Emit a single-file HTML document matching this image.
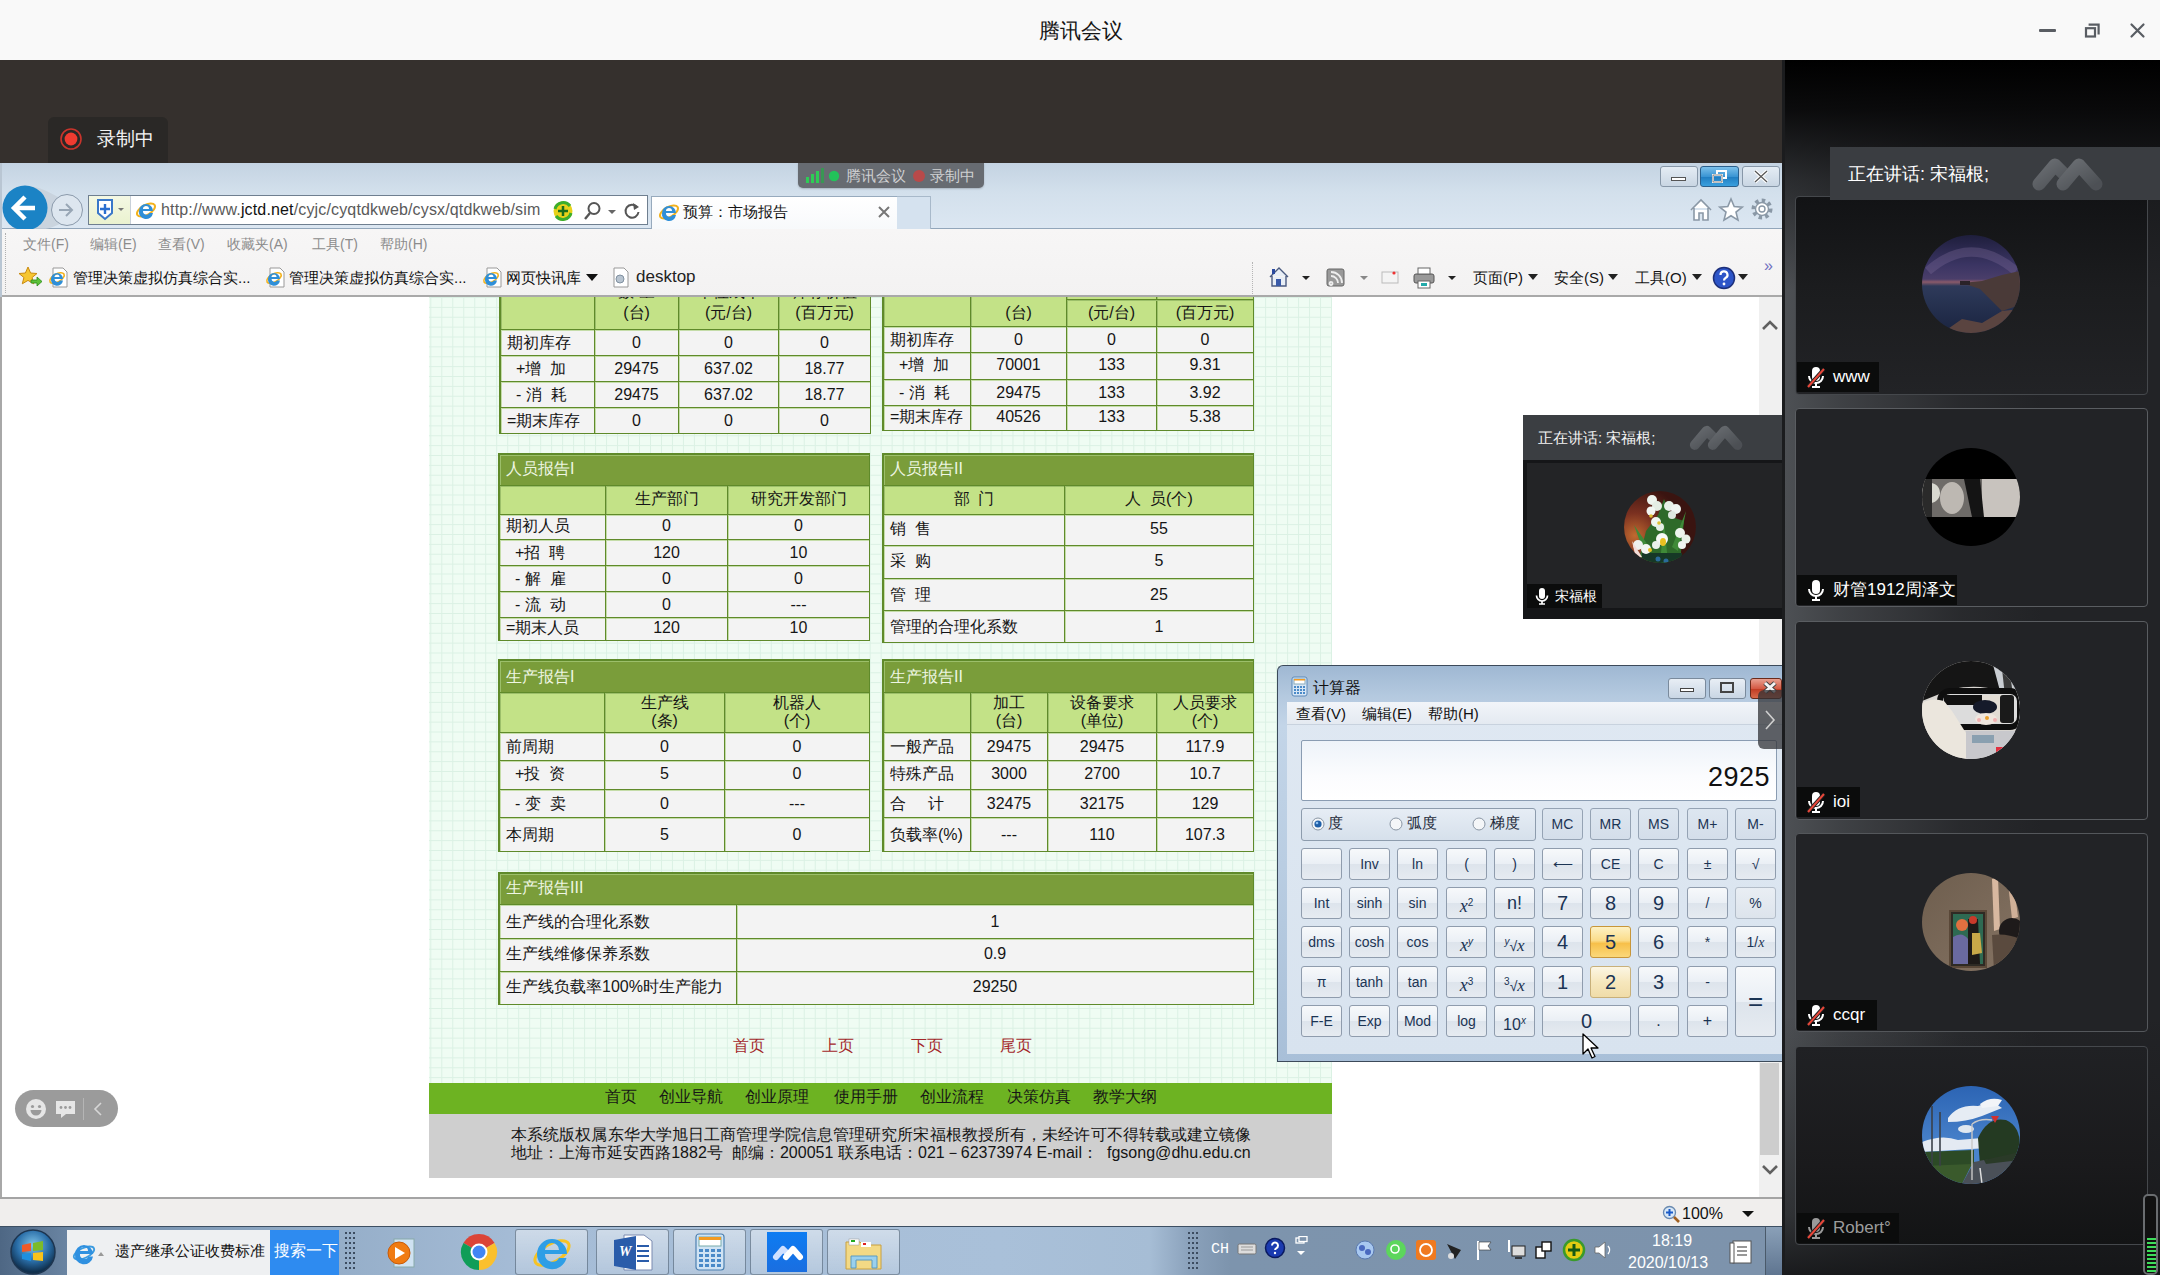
<!DOCTYPE html><html><head><meta charset="utf-8"><style>
*{margin:0;padding:0;box-sizing:border-box}
html,body{width:2160px;height:1275px;overflow:hidden;background:#f9f9f9;font-family:"Liberation Sans",sans-serif;}
.a{position:absolute}
.t{position:absolute;white-space:nowrap}
</style></head><body><div class="a" style="left:0px;top:0px;width:2160px;height:60px;background:#f9f9f9"></div>
<div class="t" style="left:1039px;top:17px;font-size:21px;color:#151515;">腾讯会议</div>
<div class="a" style="left:2039px;top:29px;width:17px;height:3px;background:#595d63;border-radius:1px"></div>
<svg class="a" style="left:2080px;top:20px;" width="24" height="24" viewBox="0 0 24 24"><rect x="6" y="8.2" width="9" height="8.3" fill="none" stroke="#595d63" stroke-width="2.2"/><path d="M8.6 4.6H18.6V14.6" fill="none" stroke="#595d63" stroke-width="2.2"/></svg>
<svg class="a" style="left:2126px;top:19px;" width="24" height="24" viewBox="0 0 24 24"><path d="M5.5 5.5L17.5 17.5M17.5 5.5L5.5 17.5" stroke="#595d63" stroke-width="2.2" stroke-linecap="round"/></svg>
<div class="a" style="left:0px;top:60px;width:1782px;height:103px;background:#35302d"></div>
<div class="a" style="left:48px;top:117px;width:120px;height:46px;background:#2a2826;border-radius:6px 6px 0 0"></div>
<svg class="a" style="left:59px;top:128px;" width="24" height="24" viewBox="0 0 24 24"><circle cx="12" cy="11" r="10" fill="none" stroke="#c8342c" stroke-width="1.6"/><circle cx="12" cy="11" r="6.4" fill="#f03b30"/></svg>
<div class="t" style="left:97px;top:128px;font-size:19px;color:#f4f4f4;line-height:22px">录制中</div>
<div class="a" style="left:0px;top:163px;width:1782px;height:66px;background:linear-gradient(180deg,#c4d3e2 0%,#d3e0ec 45%,#dce7f2 100%)"></div>
<div class="a" style="left:0px;top:228px;width:1782px;height:1px;background:#92a6ba"></div>
<div class="a" style="left:0px;top:163px;width:2px;height:134px;background:#b9c6d3"></div>
<div class="a" style="left:0px;top:297px;width:2px;height:901px;background:#a8a8a8"></div>
<svg class="a" style="left:0px;top:183px;" width="100" height="50" viewBox="0 0 100 50"><path d="M25 3 C40 3 50 10 62 16 L62 40 C50 46 40 48 25 48Z" fill="#c6d0da" opacity="0.8"/><circle cx="67" cy="27" r="15.5" fill="#dde6ef" stroke="#8b9aab" stroke-width="1"/><path d="M59 27h13M66 21l6 6-6 6" fill="none" stroke="#98a6b5" stroke-width="2"/><circle cx="25" cy="25" r="22.5" fill="#1b83c5"/><path d="M14 25h21M25 14L14 25l11 11" fill="none" stroke="#fff" stroke-width="4.5" stroke-linejoin="miter"/></svg>
<div class="a" style="left:88px;top:195px;width:560px;height:30px;background:#fff;border:1px solid #6f7f90"></div>
<div class="a" style="left:89px;top:196px;width:41px;height:28px;background:linear-gradient(180deg,#f4f8e4,#eaf2cf)"></div>
<svg class="a" style="left:94px;top:198px;" width="34" height="24" viewBox="0 0 34 24"><path d="M4 2h14v13l-7 6-7-6z" fill="#fff" stroke="#3a78c9" stroke-width="2"/><path d="M11 6v10M6 11h10" stroke="#2a6fd0" stroke-width="2.4"/><path d="M24 10l3 3 3-3z" fill="#777"/></svg>
<div class="a" style="left:130px;top:196px;width:1px;height:28px;background:#c8d0d8"></div>
<svg class="a" style="left:135px;top:199px;" width="22" height="22" viewBox="0 0 22 22"><ellipse cx="11" cy="11" rx="10" ry="5" fill="none" stroke="#f2b21e" stroke-width="2" transform="rotate(-30 11 11)"/><path d="M4 12 a7 7 0 1 1 14 0H8a3.5 3.5 0 0 0 6.5 2h3.5a7 7 0 0 1-14-2zM8 10h6a3 3 0 0 0-6 0z" fill="#2f8fd8"/></svg>
<div class="t" style="left:161px;top:199px;font-size:16px;line-height:22px;letter-spacing:0.15px"><span style="color:#5a5a5a">http://www.</span><span style="color:#111">jctd.net</span><span style="color:#5a5a5a">/cyjc/cyqtdkweb/cysx/qtdkweb/sim</span></div>
<svg class="a" style="left:552px;top:200px;" width="22" height="22" viewBox="0 0 22 22"><circle cx="11" cy="11" r="9.5" fill="#e8d21a"/><path d="M3 9a8.5 8.5 0 0 1 15-3" fill="none" stroke="#3cae2c" stroke-width="3"/><path d="M19 13a8.5 8.5 0 0 1-15 3" fill="none" stroke="#3cae2c" stroke-width="3"/><path d="M11 6v10M6 11h10" stroke="#1a6d1a" stroke-width="2.5"/></svg>
<svg class="a" style="left:582px;top:201px;" width="60" height="20" viewBox="0 0 60 20"><circle cx="12" cy="7.5" r="5.5" fill="none" stroke="#555" stroke-width="2"/><path d="M8 12l-5 6" stroke="#555" stroke-width="2.4"/><path d="M26 9l4 4 4-4z" fill="#666"/><path d="M55 6a6.5 6.5 0 1 0 1.5 5" fill="none" stroke="#555" stroke-width="2"/><path d="M51 2l6 4-5 3z" fill="#555"/></svg>
<div class="a" style="left:651px;top:196px;width:247px;height:34px;background:linear-gradient(180deg,#ffffff,#f7f9fb);border:1px solid #97aabd;border-bottom:none"></div>
<svg class="a" style="left:658px;top:201px;" width="22" height="22" viewBox="0 0 22 22"><ellipse cx="11" cy="11" rx="10" ry="5" fill="none" stroke="#f2b21e" stroke-width="2" transform="rotate(-30 11 11)"/><path d="M4 12 a7 7 0 1 1 14 0H8a3.5 3.5 0 0 0 6.5 2h3.5a7 7 0 0 1-14-2zM8 10h6a3 3 0 0 0-6 0z" fill="#2f8fd8"/></svg>
<div class="t" style="left:683px;top:202px;font-size:15px;color:#151515;line-height:20px">预算：市场报告</div>
<svg class="a" style="left:877px;top:205px;" width="14" height="14" viewBox="0 0 14 14"><path d="M2 2L12 12M12 2L2 12" stroke="#777" stroke-width="2"/></svg>
<div class="a" style="left:897px;top:196px;width:34px;height:33px;background:#d5e2ef;border:1px solid #a8b9ca;border-left:none;border-bottom:none"></div>
<div class="a" style="left:1660px;top:166px;width:38px;height:21px;background:linear-gradient(180deg,#e4ecf4,#c9d6e3);border:1px solid #8797a8;border-radius:3px"></div>
<div class="a" style="left:1671px;top:177px;width:15px;height:4px;background:#fff;border:1px solid #555"></div>
<div class="a" style="left:1700px;top:166px;width:39px;height:21px;background:linear-gradient(180deg,#7cc0ea 0%,#3a95d4 50%,#1f7cc0 51%,#3aa0de 100%);border:1px solid #2a5f8c;border-radius:3px"></div>
<svg class="a" style="left:1710px;top:168px;" width="20" height="17" viewBox="0 0 20 17"><rect x="3" y="7" width="9" height="7" fill="none" stroke="#fff" stroke-width="2"/><path d="M7 7V3h9v7h-4" fill="none" stroke="#fff" stroke-width="2"/><rect x="3" y="7" width="9" height="7" fill="none" stroke="#333" stroke-width="0.6"/></svg>
<div class="a" style="left:1742px;top:166px;width:38px;height:21px;background:linear-gradient(180deg,#e4ecf4,#c9d6e3);border:1px solid #8797a8;border-radius:3px"></div>
<svg class="a" style="left:1752px;top:168px;" width="18" height="17" viewBox="0 0 18 17"><path d="M3 3L15 14M15 3L3 14" stroke="#fff" stroke-width="3.6"/><path d="M3 3L15 14M15 3L3 14" stroke="#555" stroke-width="1.2"/></svg>
<svg class="a" style="left:1688px;top:197px;" width="90" height="26" viewBox="0 0 90 26"><path d="M3 13L13 3l10 10M6 11v12h5v-7h4v7h5V11" fill="#fff" stroke="#8a98a6" stroke-width="1.6"/><path d="M43 2l3.2 7.5 8 .6-6.2 5 2 8-7-4.3-7 4.3 2-8-6.2-5 8-.6z" fill="#fff" stroke="#8a98a6" stroke-width="1.6"/><circle cx="74" cy="12" r="8" fill="none" stroke="#8a98a6" stroke-width="5" stroke-dasharray="3.2 3"/><circle cx="74" cy="12" r="6.5" fill="#fff" stroke="#8a98a6" stroke-width="1.4"/><circle cx="74" cy="12" r="3" fill="none" stroke="#8a98a6" stroke-width="1.4"/></svg>
<div class="a" style="left:2px;top:229px;width:1780px;height:68px;background:linear-gradient(180deg,#f7f6f6,#f3f2f2)"></div>
<div class="a" style="left:5px;top:233px;width:1px;height:60px;border-left:1px dotted #b0b0b0"></div>
<div class="t" style="left:23px;top:235px;font-size:14px;color:#8c8c8c;line-height:18px">文件(F)</div>
<div class="t" style="left:90px;top:235px;font-size:14px;color:#8c8c8c;line-height:18px">编辑(E)</div>
<div class="t" style="left:158px;top:235px;font-size:14px;color:#8c8c8c;line-height:18px">查看(V)</div>
<div class="t" style="left:227px;top:235px;font-size:14px;color:#8c8c8c;line-height:18px">收藏夹(A)</div>
<div class="t" style="left:312px;top:235px;font-size:14px;color:#8c8c8c;line-height:18px">工具(T)</div>
<div class="t" style="left:380px;top:235px;font-size:14px;color:#8c8c8c;line-height:18px">帮助(H)</div>
<svg class="a" style="left:17px;top:265px;" width="26" height="24" viewBox="0 0 26 24"><path d="M11 2l2.6 6 6.4.5-4.9 4 1.6 6.3L11 15.4 5.3 18.8l1.6-6.3L2 8.5l6.4-.5z" fill="#f6c631" stroke="#c98a10" stroke-width="1"/><path d="M14 15h6v-3l5 4.5-5 4.5v-3h-6z" fill="#5cc23a" stroke="#2c8a1a" stroke-width="0.8"/></svg>
<svg class="a" style="left:47px;top:266px;" width="22" height="22" viewBox="0 0 22 22"><path d="M6 2h10l4 4v15H6z" fill="#fff" stroke="#999" stroke-width="1"/><ellipse cx="10" cy="12" rx="8" ry="4" fill="none" stroke="#f2b21e" stroke-width="1.6" transform="rotate(-30 10 12)"/><path d="M4 13 a6 6 0 1 1 12 0H7.5a3 3 0 0 0 5.5 1.5h3a6 6 0 0 1-12-1.5zM7.5 11h5a2.5 2.5 0 0 0-5 0z" fill="#2f8fd8"/></svg>
<div class="t" style="left:73px;top:268px;font-size:15px;color:#111;line-height:20px">管理决策虚拟仿真综合实...</div>
<svg class="a" style="left:264px;top:266px;" width="22" height="22" viewBox="0 0 22 22"><path d="M6 2h10l4 4v15H6z" fill="#fff" stroke="#999" stroke-width="1"/><ellipse cx="10" cy="12" rx="8" ry="4" fill="none" stroke="#f2b21e" stroke-width="1.6" transform="rotate(-30 10 12)"/><path d="M4 13 a6 6 0 1 1 12 0H7.5a3 3 0 0 0 5.5 1.5h3a6 6 0 0 1-12-1.5zM7.5 11h5a2.5 2.5 0 0 0-5 0z" fill="#2f8fd8"/></svg>
<div class="t" style="left:289px;top:268px;font-size:15px;color:#111;line-height:20px">管理决策虚拟仿真综合实...</div>
<svg class="a" style="left:481px;top:266px;" width="22" height="22" viewBox="0 0 22 22"><path d="M6 2h10l4 4v15H6z" fill="#fff" stroke="#999" stroke-width="1"/><ellipse cx="10" cy="12" rx="8" ry="4" fill="none" stroke="#f2b21e" stroke-width="1.6" transform="rotate(-30 10 12)"/><path d="M4 13 a6 6 0 1 1 12 0H7.5a3 3 0 0 0 5.5 1.5h3a6 6 0 0 1-12-1.5zM7.5 11h5a2.5 2.5 0 0 0-5 0z" fill="#2f8fd8"/></svg>
<div class="t" style="left:506px;top:268px;font-size:15px;color:#111;line-height:20px">网页快讯库</div>
<svg class="a" style="left:585px;top:273px;" width="14" height="8" viewBox="0 0 14 8"><path d="M1 1h12L7 8z" fill="#111"/></svg>
<svg class="a" style="left:611px;top:266px;" width="20" height="22" viewBox="0 0 20 22"><path d="M3 2h10l4 4v15H3z" fill="#fff" stroke="#999" stroke-width="1"/><circle cx="9" cy="13" r="4" fill="#b8c4d0" stroke="#8090a0"/></svg>
<div class="t" style="left:636px;top:267px;font-size:17px;color:#222;line-height:20px">desktop</div>
<div class="a" style="left:1252px;top:262px;width:1px;height:34px;border-left:1px dotted #b5b5b5"></div>
<svg class="a" style="left:1266px;top:264px;" width="500" height="28" viewBox="0 0 500 28"><path d="M4 13L13 4l9 9M6 12v10h14V12" fill="#e8eef6" stroke="#4a5a80" stroke-width="1.4"/><rect x="10" y="15" width="5" height="7" fill="#3a5aa8"/><rect x="6" y="5" width="3" height="5" fill="#2a4aa0"/><path d="M36 12l4 4 4-4z" fill="#222"/><rect x="61" y="5" width="17" height="17" rx="2" fill="#999" stroke="#666"/><path d="M65 18a1.5 1.5 0 1 0 0.1 0M65 12a7 7 0 0 1 7 7M65 8a11 11 0 0 1 11 11" fill="none" stroke="#eee" stroke-width="1.8"/><path d="M94 12l4 4 4-4z" fill="#888"/><rect x="116" y="8" width="16" height="11" fill="#f4f4f4" stroke="#bbb"/><circle cx="128" cy="9" r="1.6" fill="#e33"/><rect x="148" y="10" width="20" height="9" rx="2" fill="#999" stroke="#555"/><rect x="152" y="4" width="12" height="6" fill="#fff" stroke="#666"/><rect x="152" y="17" width="12" height="7" fill="#fff" stroke="#666"/><rect x="155" y="19" width="6" height="3" fill="#2aa"/><path d="M182 12l4 4 4-4z" fill="#222"/></svg>
<div class="t" style="left:1473px;top:268px;font-size:15px;color:#151515;line-height:20px">页面(P)</div>
<div class="t" style="left:1554px;top:268px;font-size:15px;color:#151515;line-height:20px">安全(S)</div>
<div class="t" style="left:1635px;top:268px;font-size:15px;color:#151515;line-height:20px">工具(O)</div>
<svg class="a" style="left:1528px;top:274px;" width="10" height="7" viewBox="0 0 10 7"><path d="M0 0h10L5 6z" fill="#222"/></svg>
<svg class="a" style="left:1608px;top:274px;" width="10" height="7" viewBox="0 0 10 7"><path d="M0 0h10L5 6z" fill="#222"/></svg>
<svg class="a" style="left:1692px;top:274px;" width="10" height="7" viewBox="0 0 10 7"><path d="M0 0h10L5 6z" fill="#222"/></svg>
<svg class="a" style="left:1738px;top:274px;" width="10" height="7" viewBox="0 0 10 7"><path d="M0 0h10L5 6z" fill="#222"/></svg>
<svg class="a" style="left:1712px;top:266px;" width="24" height="24" viewBox="0 0 24 24"><circle cx="12" cy="12" r="10.5" fill="#2d55c8" stroke="#1c2f7a" stroke-width="1.5"/><path d="M8.5 9a3.5 3.5 0 1 1 5 3c-1.3.7-1.5 1.2-1.5 2.5" fill="none" stroke="#fff" stroke-width="2.2"/><circle cx="12" cy="18" r="1.4" fill="#fff"/></svg>
<div class="t" style="left:1764px;top:257px;font-size:16px;color:#7070c0;line-height:18px">»</div>
<div class="a" style="left:2px;top:295px;width:1780px;height:2px;background:#a9a9a9"></div>
<div class="a" style="left:2px;top:297px;width:1757px;height:901px;background:#fff"></div>
<div class="a" style="left:1759px;top:297px;width:23px;height:901px;background:#f0f0f0"></div>
<svg class="a" style="left:1760px;top:317px;" width="20" height="16" viewBox="0 0 20 16"><path d="M3 12L10 5l7 7" fill="none" stroke="#606060" stroke-width="2.6"/></svg>
<div class="a" style="left:1760px;top:1063px;width:19px;height:92px;background:#cdcdcd"></div>
<svg class="a" style="left:1760px;top:1162px;" width="20" height="16" viewBox="0 0 20 16"><path d="M3 4l7 7 7-7" fill="none" stroke="#606060" stroke-width="2.6"/></svg>
<div class="a" style="left:0px;top:1197px;width:1782px;height:2px;background:#a4a4a4"></div>
<div class="a" style="left:0px;top:1199px;width:1782px;height:27px;background:#f0eeed"></div>
<svg class="a" style="left:1662px;top:1205px;" width="20" height="18" viewBox="0 0 20 18"><circle cx="7.5" cy="7.5" r="6" fill="#d8e8f8" stroke="#6a8ab0" stroke-width="1.3"/><path d="M7.5 4v7M4 7.5h7" stroke="#1a5ac8" stroke-width="2"/><path d="M12 12l5 5" stroke="#a06020" stroke-width="2.6"/></svg>
<div class="t" style="left:1682px;top:1204px;font-size:16px;color:#111;line-height:20px">100%</div>
<svg class="a" style="left:1742px;top:1211px;" width="12" height="7" viewBox="0 0 12 7"><path d="M0 0h12L6 6z" fill="#111"/></svg>
<div class="a" style="left:0px;top:1226px;width:1782px;height:49px;background:linear-gradient(90deg,#4e6784 0px,#6f8aa8 80px,#92abc6 300px,#a5bcd6 520px,#a9c0d9 1000px,#a6bdd5 1150px,#8aa1bb 1190px,#7d94ad 1230px,#7d93ac 1760px)"></div>
<div class="a" style="left:0px;top:1226px;width:1782px;height:1px;background:#3d4f63"></div>
<svg class="a" style="left:5px;top:1228px;" width="56" height="47" viewBox="0 0 56 47"><circle cx="28" cy="24" r="22" fill="url(#orb)" stroke="#1d3550" stroke-width="1.5"/><defs><radialGradient id="orb" cx="50%" cy="35%" r="60%"><stop offset="0" stop-color="#7fc4e8"/><stop offset="0.6" stop-color="#2a6ea8"/><stop offset="1" stop-color="#10304e"/></radialGradient></defs><path d="M17 17l9-2v8l-9 1z" fill="#f05a28"/><path d="M28 15l10-2v9l-10 1z" fill="#7cbb2a"/><path d="M17 26l9-1v8l-9-2z" fill="#1e90e0"/><path d="M28 25l10-1v9l-10-1z" fill="#f8c21a"/></svg>
<div class="a" style="left:67px;top:1230px;width:203px;height:45px;background:#eef0f2"></div>
<svg class="a" style="left:72px;top:1238px;" width="34" height="30" viewBox="0 0 34 30"><ellipse cx="12" cy="15" rx="11" ry="5" fill="none" stroke="#3a9be0" stroke-width="1.8" transform="rotate(-25 12 15)"/><path d="M3 16 a9 9 0 1 1 18 0H8a4.5 4.5 0 0 0 8.5 2.5h4.5a9 9 0 0 1-18-2.5zM8 13h8a4 4 0 0 0-8 0z" fill="#2f90e0"/><path d="M26 18l3-4 3 4z" fill="#999"/></svg>
<div class="t" style="left:115px;top:1241px;font-size:15px;color:#111;line-height:20px">遗产继承公证收费标准</div>
<div class="a" style="left:270px;top:1230px;width:69px;height:45px;background:#2e8bf0"></div>
<div class="t" style="left:274px;top:1241px;font-size:16px;color:#fff;line-height:20px">搜索一下</div>
<svg class="a" style="left:345px;top:1232px;" width="10" height="40" viewBox="0 0 10 40"><rect x="0" y="0" width="2" height="2" fill="#3c4c60"/><rect x="4" y="0" width="2" height="2" fill="#3c4c60"/><rect x="8" y="0" width="2" height="2" fill="#3c4c60"/><rect x="0" y="5" width="2" height="2" fill="#3c4c60"/><rect x="4" y="5" width="2" height="2" fill="#3c4c60"/><rect x="8" y="5" width="2" height="2" fill="#3c4c60"/><rect x="0" y="10" width="2" height="2" fill="#3c4c60"/><rect x="4" y="10" width="2" height="2" fill="#3c4c60"/><rect x="8" y="10" width="2" height="2" fill="#3c4c60"/><rect x="0" y="15" width="2" height="2" fill="#3c4c60"/><rect x="4" y="15" width="2" height="2" fill="#3c4c60"/><rect x="8" y="15" width="2" height="2" fill="#3c4c60"/><rect x="0" y="20" width="2" height="2" fill="#3c4c60"/><rect x="4" y="20" width="2" height="2" fill="#3c4c60"/><rect x="8" y="20" width="2" height="2" fill="#3c4c60"/><rect x="0" y="25" width="2" height="2" fill="#3c4c60"/><rect x="4" y="25" width="2" height="2" fill="#3c4c60"/><rect x="8" y="25" width="2" height="2" fill="#3c4c60"/><rect x="0" y="30" width="2" height="2" fill="#3c4c60"/><rect x="4" y="30" width="2" height="2" fill="#3c4c60"/><rect x="8" y="30" width="2" height="2" fill="#3c4c60"/><rect x="0" y="35" width="2" height="2" fill="#3c4c60"/><rect x="4" y="35" width="2" height="2" fill="#3c4c60"/><rect x="8" y="35" width="2" height="2" fill="#3c4c60"/></svg>
<svg class="a" style="left:1188px;top:1232px;" width="10" height="40" viewBox="0 0 10 40"><rect x="0" y="0" width="2" height="2" fill="#3c4c60"/><rect x="4" y="0" width="2" height="2" fill="#3c4c60"/><rect x="8" y="0" width="2" height="2" fill="#3c4c60"/><rect x="0" y="5" width="2" height="2" fill="#3c4c60"/><rect x="4" y="5" width="2" height="2" fill="#3c4c60"/><rect x="8" y="5" width="2" height="2" fill="#3c4c60"/><rect x="0" y="10" width="2" height="2" fill="#3c4c60"/><rect x="4" y="10" width="2" height="2" fill="#3c4c60"/><rect x="8" y="10" width="2" height="2" fill="#3c4c60"/><rect x="0" y="15" width="2" height="2" fill="#3c4c60"/><rect x="4" y="15" width="2" height="2" fill="#3c4c60"/><rect x="8" y="15" width="2" height="2" fill="#3c4c60"/><rect x="0" y="20" width="2" height="2" fill="#3c4c60"/><rect x="4" y="20" width="2" height="2" fill="#3c4c60"/><rect x="8" y="20" width="2" height="2" fill="#3c4c60"/><rect x="0" y="25" width="2" height="2" fill="#3c4c60"/><rect x="4" y="25" width="2" height="2" fill="#3c4c60"/><rect x="8" y="25" width="2" height="2" fill="#3c4c60"/><rect x="0" y="30" width="2" height="2" fill="#3c4c60"/><rect x="4" y="30" width="2" height="2" fill="#3c4c60"/><rect x="8" y="30" width="2" height="2" fill="#3c4c60"/><rect x="0" y="35" width="2" height="2" fill="#3c4c60"/><rect x="4" y="35" width="2" height="2" fill="#3c4c60"/><rect x="8" y="35" width="2" height="2" fill="#3c4c60"/></svg>
<svg class="a" style="left:384px;top:1236px;" width="36" height="34" viewBox="0 0 36 34"><rect x="10" y="3" width="20" height="28" fill="#cfe2f2" stroke="#8aa" stroke-width="1"/><circle cx="15" cy="17" r="11" fill="#f07b12" stroke="#c85a08"/><path d="M11 11l10 6-10 6z" fill="#fff"/></svg>
<svg class="a" style="left:459px;top:1232px;" width="40" height="40" viewBox="0 0 40 40"><path d="M20 20L4.41 11A18 18 0 0 1 35.59 11Z" fill="#db4437"/><path d="M20 20L35.59 11A18 18 0 0 1 20 38Z" fill="#fbc02d"/><path d="M20 20L20 38A18 18 0 0 1 4.41 11Z" fill="#0f9d58"/><circle cx="20" cy="20" r="8.5" fill="#fff"/><circle cx="20" cy="20" r="6.5" fill="#4285f4"/></svg>
<div class="a" style="left:515px;top:1229px;width:73px;height:46px;background:linear-gradient(180deg,rgba(255,255,255,0.45),rgba(255,255,255,0.15));border:1px solid rgba(60,80,100,0.55);border-radius:3px"></div>
<div class="a" style="left:596px;top:1229px;width:73px;height:46px;background:linear-gradient(180deg,rgba(255,255,255,0.45),rgba(255,255,255,0.15));border:1px solid rgba(60,80,100,0.55);border-radius:3px"></div>
<div class="a" style="left:673px;top:1229px;width:73px;height:46px;background:linear-gradient(180deg,rgba(255,255,255,0.45),rgba(255,255,255,0.15));border:1px solid rgba(60,80,100,0.55);border-radius:3px"></div>
<div class="a" style="left:750px;top:1229px;width:73px;height:46px;background:linear-gradient(180deg,rgba(255,255,255,0.45),rgba(255,255,255,0.15));border:1px solid rgba(60,80,100,0.55);border-radius:3px"></div>
<div class="a" style="left:827px;top:1229px;width:73px;height:46px;background:linear-gradient(180deg,rgba(255,255,255,0.45),rgba(255,255,255,0.15));border:1px solid rgba(60,80,100,0.55);border-radius:3px"></div>
<svg class="a" style="left:530px;top:1232px;" width="44" height="40" viewBox="0 0 44 40"><ellipse cx="22" cy="21" rx="19" ry="9" fill="none" stroke="#f6c324" stroke-width="3" transform="rotate(-30 22 21)"/><path d="M7 22 a15 15 0 1 1 30 0H15a7.5 7.5 0 0 0 14 4h7.5a15 15 0 0 1-29.5-4zM15 18h14a7 7 0 0 0-14 0z" fill="#2e9ee6"/></svg>
<svg class="a" style="left:610px;top:1232px;" width="46" height="40" viewBox="0 0 46 40"><path d="M14 3h20l8 6v29H14z" fill="#fff" stroke="#7a8ab0"/><path d="M4 8l22-4v34L4 34z" fill="#2a5caa"/><text x="9" y="24" font-size="14" font-weight="bold" font-style="italic" fill="#fff" font-family="Liberation Serif">W</text><path d="M27 14h12M27 19h12M27 24h12M27 29h12" stroke="#2a5caa" stroke-width="2"/></svg>
<svg class="a" style="left:693px;top:1232px;" width="34" height="40" viewBox="0 0 34 40"><rect x="3" y="2" width="28" height="36" rx="3" fill="#cfe3f4" stroke="#4d80b0" stroke-width="1.2"/><rect x="6" y="5" width="22" height="9" fill="#fff" stroke="#7aa"/><rect x="6" y="5" width="22" height="3" fill="#f29a22"/><rect x="6" y="17" width="4" height="3" fill="#4a8ac8"/><rect x="12" y="17" width="4" height="3" fill="#4a8ac8"/><rect x="18" y="17" width="4" height="3" fill="#4a8ac8"/><rect x="24" y="17" width="4" height="3" fill="#4a8ac8"/><rect x="6" y="22" width="4" height="3" fill="#4a8ac8"/><rect x="12" y="22" width="4" height="3" fill="#4a8ac8"/><rect x="18" y="22" width="4" height="3" fill="#4a8ac8"/><rect x="24" y="22" width="4" height="3" fill="#4a8ac8"/><rect x="6" y="27" width="4" height="3" fill="#4a8ac8"/><rect x="12" y="27" width="4" height="3" fill="#4a8ac8"/><rect x="18" y="27" width="4" height="3" fill="#4a8ac8"/><rect x="24" y="27" width="4" height="3" fill="#4a8ac8"/><rect x="6" y="32" width="4" height="3" fill="#4a8ac8"/><rect x="12" y="32" width="4" height="3" fill="#4a8ac8"/><rect x="18" y="32" width="4" height="3" fill="#4a8ac8"/><rect x="24" y="32" width="4" height="3" fill="#4a8ac8"/></svg>
<div class="a" style="left:767px;top:1232px;width:40px;height:40px;background:linear-gradient(180deg,#0d7cf2,#1a6ee0)"></div>
<svg class="a" style="left:767px;top:1232px;" width="40" height="40" viewBox="0 0 40 40"><path d="M9 25 L16 17 L21 22" fill="none" stroke="#cfe0ff" stroke-width="6" stroke-linecap="round" stroke-linejoin="round"/><path d="M19 25 L26 17 L33 25" fill="none" stroke="#fff" stroke-width="6" stroke-linecap="round" stroke-linejoin="round"/></svg>
<svg class="a" style="left:843px;top:1234px;" width="42" height="38" viewBox="0 0 42 38"><path d="M3 8h14l3 3h18v24H3z" fill="#f3d985" stroke="#c8a040"/><rect x="6" y="5" width="10" height="6" fill="#fff" stroke="#999" stroke-width="0.5"/><rect x="8" y="6" width="4" height="2" fill="#2a2"/><rect x="18" y="8" width="10" height="5" fill="#fff"/><rect x="20" y="9" width="3" height="2" fill="#d22"/><path d="M8 22h26v12h-5v-8H13v8H8z" fill="#9ad0ee" stroke="#5a9ac0"/></svg>
<div class="t" style="left:1211px;top:1241px;font-size:15px;color:#fff;font-family:'Liberation Mono',monospace;line-height:18px">CH</div>
<svg class="a" style="left:1236px;top:1240px;" width="24" height="16" viewBox="0 0 24 16"><rect x="2" y="4" width="18" height="10" rx="1.5" fill="#ddd" stroke="#777"/><path d="M5 7h12M5 10h12" stroke="#999" stroke-width="1"/></svg>
<svg class="a" style="left:1264px;top:1237px;" width="22" height="22" viewBox="0 0 22 22"><circle cx="11" cy="11" r="9.5" fill="#1a3ab0" stroke="#0a1a60" stroke-width="1.5"/><path d="M8 8.5a3 3 0 1 1 4.5 2.6c-1 .6-1.4 1-1.4 2" fill="none" stroke="#fff" stroke-width="2"/><circle cx="11" cy="16" r="1.2" fill="#fff"/></svg>
<svg class="a" style="left:1293px;top:1236px;" width="18" height="24" viewBox="0 0 18 24"><rect x="3" y="2" width="8" height="5" fill="none" stroke="#fff" stroke-width="1.3"/><rect x="6" y="0.5" width="8" height="5" fill="#7d93ac" stroke="#fff" stroke-width="1.3"/><path d="M4 15h8l-4 4z" fill="#fff"/></svg>
<svg class="a" style="left:1353px;top:1238px;" width="24" height="24" viewBox="0 0 24 24"><circle cx="12" cy="12" r="9" fill="#a8c8f0" stroke="#5a7ab0"/><circle cx="9" cy="10" r="3" fill="#4a6ac0"/><circle cx="15" cy="14" r="3" fill="#4a6ac0"/></svg>
<svg class="a" style="left:1384px;top:1238px;" width="24" height="24" viewBox="0 0 24 24"><circle cx="12" cy="12" r="10" fill="#5cd65c"/><circle cx="11" cy="11" r="4" fill="none" stroke="#fff" stroke-width="1.6"/></svg>
<svg class="a" style="left:1414px;top:1238px;" width="24" height="24" viewBox="0 0 24 24"><rect x="2" y="2" width="20" height="20" rx="3" fill="#f07a20"/><circle cx="12" cy="12" r="6" fill="none" stroke="#fff" stroke-width="1.8"/></svg>
<svg class="a" style="left:1443px;top:1238px;" width="24" height="24" viewBox="0 0 24 24"><path d="M4 6l14 6-6 9z" fill="#222"/><circle cx="8" cy="18" r="3" fill="#ddd"/></svg>
<svg class="a" style="left:1473px;top:1238px;" width="24" height="24" viewBox="0 0 24 24"><path d="M5 3v19" stroke="#fff" stroke-width="2"/><path d="M6 4h12l-3 4 3 4H6z" fill="#fff" stroke="#333" stroke-width="0.6"/></svg>
<svg class="a" style="left:1503px;top:1238px;" width="24" height="24" viewBox="0 0 24 24"><rect x="9" y="8" width="13" height="10" fill="#ddd" stroke="#222"/><path d="M6 2v12" stroke="#fff" stroke-width="2"/><path d="M12 20h7" stroke="#222" stroke-width="1.6"/></svg>
<svg class="a" style="left:1532px;top:1238px;" width="24" height="24" viewBox="0 0 24 24"><rect x="4" y="9" width="9" height="11" fill="#fff" stroke="#111" stroke-width="1.4"/><rect x="10" y="4" width="9" height="9" fill="#fff" stroke="#111" stroke-width="1.4"/></svg>
<svg class="a" style="left:1562px;top:1238px;" width="24" height="24" viewBox="0 0 24 24"><circle cx="12" cy="12" r="10" fill="#e3cc12" stroke="#3a9a2a" stroke-width="2.5"/><path d="M12 6v12M6 12h12" stroke="#155a15" stroke-width="3"/></svg>
<svg class="a" style="left:1591px;top:1238px;" width="24" height="24" viewBox="0 0 24 24"><path d="M4 9h4l6-5v16l-6-5H4z" fill="#fff" stroke="#666" stroke-width="0.8"/><path d="M17 8a6 6 0 0 1 0 8" fill="none" stroke="#fff" stroke-width="1.4"/></svg>
<div class="t" style="left:1652px;top:1232px;font-size:16px;color:#fff;line-height:18px">18:19</div>
<div class="t" style="left:1628px;top:1254px;font-size:16px;color:#fff;line-height:18px">2020/10/13</div>
<svg class="a" style="left:1727px;top:1239px;" width="26" height="26" viewBox="0 0 26 26"><rect x="6" y="2" width="18" height="22" fill="#fff" stroke="#555"/><rect x="3" y="4" width="4" height="20" fill="#fff" stroke="#555"/><path d="M10 8h10M10 12h10M10 16h10" stroke="#777" stroke-width="1.4"/></svg>
<div class="a" style="left:1765px;top:1227px;width:17px;height:48px;background:linear-gradient(180deg,#8aa0b8,#5f7590);border-left:1px solid #4a5a6a"></div>
<div class="a" style="left:0;top:297px;width:1759px;height:901px;overflow:hidden">
<div class="a" style="left:429px;top:-7px;width:903px;height:793px;background-color:#effcf3;background-image:linear-gradient(90deg,#dbf1e4 1px,transparent 1px),linear-gradient(180deg,#dbf1e4 1px,transparent 1px);background-size:10.985px 9.89px;background-position:1.3px 7px"></div>
<div class="a" style="left:499px;top:-22px;width:372px;height:159px;background:#5f8a2a"></div>
<div class="a" style="left:501px;top:-20px;width:93px;height:52px;background:#c3e287;box-shadow:inset 1px 1px 0 #9cbf6a;color:#151515;font-size:16px;overflow:visible"><div style="position:absolute;left:0;right:0;top:50%;transform:translateY(calc(-50% - 1px));line-height:52px;text-align:left;padding-left:6px;white-space:nowrap"></div></div>
<div class="a" style="left:595px;top:-20px;width:83px;height:52px;background:#c3e287;box-shadow:inset 1px 1px 0 #9cbf6a;color:#151515;font-size:16px;overflow:visible"><div style="position:absolute;left:0;right:0;top:50%;transform:translateY(calc(-50% - 1px));line-height:21px;text-align:center;white-space:nowrap">数 量<br>(台)</div></div>
<div class="a" style="left:679px;top:-20px;width:99px;height:52px;background:#c3e287;box-shadow:inset 1px 1px 0 #9cbf6a;color:#151515;font-size:16px;overflow:visible"><div style="position:absolute;left:0;right:0;top:50%;transform:translateY(calc(-50% - 1px));line-height:21px;text-align:center;white-space:nowrap">单位成本<br>(元/台)</div></div>
<div class="a" style="left:779px;top:-20px;width:91px;height:52px;background:#c3e287;box-shadow:inset 1px 1px 0 #9cbf6a;color:#151515;font-size:16px;overflow:visible"><div style="position:absolute;left:0;right:0;top:50%;transform:translateY(calc(-50% - 1px));line-height:21px;text-align:center;white-space:nowrap">库存价值<br>(百万元)</div></div>
<div class="a" style="left:501px;top:33px;width:93px;height:25px;background:#f3f3f3;box-shadow:inset 1px 1px 0 #c4dca8;color:#151515;font-size:16px;overflow:visible"><div style="position:absolute;left:0;right:0;top:50%;transform:translateY(calc(-50% - 1px));line-height:25px;text-align:left;padding-left:6px;white-space:nowrap">期初库存</div></div>
<div class="a" style="left:595px;top:33px;width:83px;height:25px;background:#f3f3f3;box-shadow:inset 1px 1px 0 #c4dca8;color:#151515;font-size:16px;overflow:visible"><div style="position:absolute;left:0;right:0;top:50%;transform:translateY(calc(-50% - 1px));line-height:25px;text-align:center;white-space:nowrap">0</div></div>
<div class="a" style="left:679px;top:33px;width:99px;height:25px;background:#f3f3f3;box-shadow:inset 1px 1px 0 #c4dca8;color:#151515;font-size:16px;overflow:visible"><div style="position:absolute;left:0;right:0;top:50%;transform:translateY(calc(-50% - 1px));line-height:25px;text-align:center;white-space:nowrap">0</div></div>
<div class="a" style="left:779px;top:33px;width:91px;height:25px;background:#f3f3f3;box-shadow:inset 1px 1px 0 #c4dca8;color:#151515;font-size:16px;overflow:visible"><div style="position:absolute;left:0;right:0;top:50%;transform:translateY(calc(-50% - 1px));line-height:25px;text-align:center;white-space:nowrap">0</div></div>
<div class="a" style="left:501px;top:59px;width:93px;height:25px;background:#f3f3f3;box-shadow:inset 1px 1px 0 #c4dca8;color:#151515;font-size:16px;overflow:visible"><div style="position:absolute;left:0;right:0;top:50%;transform:translateY(calc(-50% - 1px));line-height:25px;text-align:left;padding-left:6px;white-space:nowrap">&nbsp;&nbsp;+增&nbsp;&nbsp;加</div></div>
<div class="a" style="left:595px;top:59px;width:83px;height:25px;background:#f3f3f3;box-shadow:inset 1px 1px 0 #c4dca8;color:#151515;font-size:16px;overflow:visible"><div style="position:absolute;left:0;right:0;top:50%;transform:translateY(calc(-50% - 1px));line-height:25px;text-align:center;white-space:nowrap">29475</div></div>
<div class="a" style="left:679px;top:59px;width:99px;height:25px;background:#f3f3f3;box-shadow:inset 1px 1px 0 #c4dca8;color:#151515;font-size:16px;overflow:visible"><div style="position:absolute;left:0;right:0;top:50%;transform:translateY(calc(-50% - 1px));line-height:25px;text-align:center;white-space:nowrap">637.02</div></div>
<div class="a" style="left:779px;top:59px;width:91px;height:25px;background:#f3f3f3;box-shadow:inset 1px 1px 0 #c4dca8;color:#151515;font-size:16px;overflow:visible"><div style="position:absolute;left:0;right:0;top:50%;transform:translateY(calc(-50% - 1px));line-height:25px;text-align:center;white-space:nowrap">18.77</div></div>
<div class="a" style="left:501px;top:85px;width:93px;height:25px;background:#f3f3f3;box-shadow:inset 1px 1px 0 #c4dca8;color:#151515;font-size:16px;overflow:visible"><div style="position:absolute;left:0;right:0;top:50%;transform:translateY(calc(-50% - 1px));line-height:25px;text-align:left;padding-left:6px;white-space:nowrap">&nbsp;&nbsp;- 消&nbsp;&nbsp;耗</div></div>
<div class="a" style="left:595px;top:85px;width:83px;height:25px;background:#f3f3f3;box-shadow:inset 1px 1px 0 #c4dca8;color:#151515;font-size:16px;overflow:visible"><div style="position:absolute;left:0;right:0;top:50%;transform:translateY(calc(-50% - 1px));line-height:25px;text-align:center;white-space:nowrap">29475</div></div>
<div class="a" style="left:679px;top:85px;width:99px;height:25px;background:#f3f3f3;box-shadow:inset 1px 1px 0 #c4dca8;color:#151515;font-size:16px;overflow:visible"><div style="position:absolute;left:0;right:0;top:50%;transform:translateY(calc(-50% - 1px));line-height:25px;text-align:center;white-space:nowrap">637.02</div></div>
<div class="a" style="left:779px;top:85px;width:91px;height:25px;background:#f3f3f3;box-shadow:inset 1px 1px 0 #c4dca8;color:#151515;font-size:16px;overflow:visible"><div style="position:absolute;left:0;right:0;top:50%;transform:translateY(calc(-50% - 1px));line-height:25px;text-align:center;white-space:nowrap">18.77</div></div>
<div class="a" style="left:501px;top:111px;width:93px;height:25px;background:#f3f3f3;box-shadow:inset 1px 1px 0 #c4dca8;color:#151515;font-size:16px;overflow:visible"><div style="position:absolute;left:0;right:0;top:50%;transform:translateY(calc(-50% - 1px));line-height:25px;text-align:left;padding-left:6px;white-space:nowrap">=期末库存</div></div>
<div class="a" style="left:595px;top:111px;width:83px;height:25px;background:#f3f3f3;box-shadow:inset 1px 1px 0 #c4dca8;color:#151515;font-size:16px;overflow:visible"><div style="position:absolute;left:0;right:0;top:50%;transform:translateY(calc(-50% - 1px));line-height:25px;text-align:center;white-space:nowrap">0</div></div>
<div class="a" style="left:679px;top:111px;width:99px;height:25px;background:#f3f3f3;box-shadow:inset 1px 1px 0 #c4dca8;color:#151515;font-size:16px;overflow:visible"><div style="position:absolute;left:0;right:0;top:50%;transform:translateY(calc(-50% - 1px));line-height:25px;text-align:center;white-space:nowrap">0</div></div>
<div class="a" style="left:779px;top:111px;width:91px;height:25px;background:#f3f3f3;box-shadow:inset 1px 1px 0 #c4dca8;color:#151515;font-size:16px;overflow:visible"><div style="position:absolute;left:0;right:0;top:50%;transform:translateY(calc(-50% - 1px));line-height:25px;text-align:center;white-space:nowrap">0</div></div>
<div class="a" style="left:882px;top:-19px;width:372px;height:153px;background:#5f8a2a"></div>
<div class="a" style="left:884px;top:-17px;width:86px;height:46px;background:#c3e287;box-shadow:inset 1px 1px 0 #9cbf6a;color:#151515;font-size:16px;overflow:visible"><div style="position:absolute;left:0;right:0;top:50%;transform:translateY(calc(-50% - 1px));line-height:46px;text-align:left;padding-left:6px;white-space:nowrap"></div></div>
<div class="a" style="left:971px;top:-17px;width:95px;height:46px;background:#c3e287;box-shadow:inset 1px 1px 0 #9cbf6a;color:#151515;font-size:16px;overflow:visible"><div style="position:absolute;left:0;right:0;top:50%;transform:translateY(calc(-50% - 1px));line-height:21px;text-align:center;white-space:nowrap">&nbsp;<br>(台)</div></div>
<div class="a" style="left:1067px;top:-17px;width:89px;height:46px;background:#c3e287;box-shadow:inset 1px 1px 0 #9cbf6a;color:#151515;font-size:16px;overflow:visible"><div style="position:absolute;left:0;right:0;top:50%;transform:translateY(calc(-50% - 1px));line-height:21px;text-align:center;white-space:nowrap">&nbsp;<br>(元/台)</div></div>
<div class="a" style="left:1157px;top:-17px;width:96px;height:46px;background:#c3e287;box-shadow:inset 1px 1px 0 #9cbf6a;color:#151515;font-size:16px;overflow:visible"><div style="position:absolute;left:0;right:0;top:50%;transform:translateY(calc(-50% - 1px));line-height:21px;text-align:center;white-space:nowrap">&nbsp;<br>(百万元)</div></div>
<div class="a" style="left:884px;top:30px;width:86px;height:25px;background:#f3f3f3;box-shadow:inset 1px 1px 0 #c4dca8;color:#151515;font-size:16px;overflow:visible"><div style="position:absolute;left:0;right:0;top:50%;transform:translateY(calc(-50% - 1px));line-height:25px;text-align:left;padding-left:6px;white-space:nowrap">期初库存</div></div>
<div class="a" style="left:971px;top:30px;width:95px;height:25px;background:#f3f3f3;box-shadow:inset 1px 1px 0 #c4dca8;color:#151515;font-size:16px;overflow:visible"><div style="position:absolute;left:0;right:0;top:50%;transform:translateY(calc(-50% - 1px));line-height:25px;text-align:center;white-space:nowrap">0</div></div>
<div class="a" style="left:1067px;top:30px;width:89px;height:25px;background:#f3f3f3;box-shadow:inset 1px 1px 0 #c4dca8;color:#151515;font-size:16px;overflow:visible"><div style="position:absolute;left:0;right:0;top:50%;transform:translateY(calc(-50% - 1px));line-height:25px;text-align:center;white-space:nowrap">0</div></div>
<div class="a" style="left:1157px;top:30px;width:96px;height:25px;background:#f3f3f3;box-shadow:inset 1px 1px 0 #c4dca8;color:#151515;font-size:16px;overflow:visible"><div style="position:absolute;left:0;right:0;top:50%;transform:translateY(calc(-50% - 1px));line-height:25px;text-align:center;white-space:nowrap">0</div></div>
<div class="a" style="left:884px;top:56px;width:86px;height:26px;background:#f3f3f3;box-shadow:inset 1px 1px 0 #c4dca8;color:#151515;font-size:16px;overflow:visible"><div style="position:absolute;left:0;right:0;top:50%;transform:translateY(calc(-50% - 1px));line-height:26px;text-align:left;padding-left:6px;white-space:nowrap">&nbsp;&nbsp;+增&nbsp;&nbsp;加</div></div>
<div class="a" style="left:971px;top:56px;width:95px;height:26px;background:#f3f3f3;box-shadow:inset 1px 1px 0 #c4dca8;color:#151515;font-size:16px;overflow:visible"><div style="position:absolute;left:0;right:0;top:50%;transform:translateY(calc(-50% - 1px));line-height:26px;text-align:center;white-space:nowrap">70001</div></div>
<div class="a" style="left:1067px;top:56px;width:89px;height:26px;background:#f3f3f3;box-shadow:inset 1px 1px 0 #c4dca8;color:#151515;font-size:16px;overflow:visible"><div style="position:absolute;left:0;right:0;top:50%;transform:translateY(calc(-50% - 1px));line-height:26px;text-align:center;white-space:nowrap">133</div></div>
<div class="a" style="left:1157px;top:56px;width:96px;height:26px;background:#f3f3f3;box-shadow:inset 1px 1px 0 #c4dca8;color:#151515;font-size:16px;overflow:visible"><div style="position:absolute;left:0;right:0;top:50%;transform:translateY(calc(-50% - 1px));line-height:26px;text-align:center;white-space:nowrap">9.31</div></div>
<div class="a" style="left:884px;top:83px;width:86px;height:25px;background:#f3f3f3;box-shadow:inset 1px 1px 0 #c4dca8;color:#151515;font-size:16px;overflow:visible"><div style="position:absolute;left:0;right:0;top:50%;transform:translateY(calc(-50% - 1px));line-height:25px;text-align:left;padding-left:6px;white-space:nowrap">&nbsp;&nbsp;- 消&nbsp;&nbsp;耗</div></div>
<div class="a" style="left:971px;top:83px;width:95px;height:25px;background:#f3f3f3;box-shadow:inset 1px 1px 0 #c4dca8;color:#151515;font-size:16px;overflow:visible"><div style="position:absolute;left:0;right:0;top:50%;transform:translateY(calc(-50% - 1px));line-height:25px;text-align:center;white-space:nowrap">29475</div></div>
<div class="a" style="left:1067px;top:83px;width:89px;height:25px;background:#f3f3f3;box-shadow:inset 1px 1px 0 #c4dca8;color:#151515;font-size:16px;overflow:visible"><div style="position:absolute;left:0;right:0;top:50%;transform:translateY(calc(-50% - 1px));line-height:25px;text-align:center;white-space:nowrap">133</div></div>
<div class="a" style="left:1157px;top:83px;width:96px;height:25px;background:#f3f3f3;box-shadow:inset 1px 1px 0 #c4dca8;color:#151515;font-size:16px;overflow:visible"><div style="position:absolute;left:0;right:0;top:50%;transform:translateY(calc(-50% - 1px));line-height:25px;text-align:center;white-space:nowrap">3.92</div></div>
<div class="a" style="left:884px;top:109px;width:86px;height:24px;background:#f3f3f3;box-shadow:inset 1px 1px 0 #c4dca8;color:#151515;font-size:16px;overflow:visible"><div style="position:absolute;left:0;right:0;top:50%;transform:translateY(calc(-50% - 1px));line-height:24px;text-align:left;padding-left:6px;white-space:nowrap">=期末库存</div></div>
<div class="a" style="left:971px;top:109px;width:95px;height:24px;background:#f3f3f3;box-shadow:inset 1px 1px 0 #c4dca8;color:#151515;font-size:16px;overflow:visible"><div style="position:absolute;left:0;right:0;top:50%;transform:translateY(calc(-50% - 1px));line-height:24px;text-align:center;white-space:nowrap">40526</div></div>
<div class="a" style="left:1067px;top:109px;width:89px;height:24px;background:#f3f3f3;box-shadow:inset 1px 1px 0 #c4dca8;color:#151515;font-size:16px;overflow:visible"><div style="position:absolute;left:0;right:0;top:50%;transform:translateY(calc(-50% - 1px));line-height:24px;text-align:center;white-space:nowrap">133</div></div>
<div class="a" style="left:1157px;top:109px;width:96px;height:24px;background:#f3f3f3;box-shadow:inset 1px 1px 0 #c4dca8;color:#151515;font-size:16px;overflow:visible"><div style="position:absolute;left:0;right:0;top:50%;transform:translateY(calc(-50% - 1px));line-height:24px;text-align:center;white-space:nowrap">5.38</div></div>
<div class="a" style="left:1067px;top:2px;width:186px;height:1px;background:#5f8a2a"></div>
<div class="a" style="left:1067px;top:3px;width:186px;height:1px;background:#9cbf6a"></div>
<div class="a" style="left:498px;top:156px;width:372px;height:188px;background:#5f8a2a"></div>
<div class="a" style="left:500px;top:158px;width:369px;height:30px;background:#7a9d3a;box-shadow:inset 1px 1px 0 #9cbf6a;color:#eef6e2;font-size:16px;overflow:visible"><div style="position:absolute;left:0;right:0;top:50%;transform:translateY(calc(-50% - 1px));line-height:30px;text-align:left;padding-left:6px;white-space:nowrap">人员报告I</div></div>
<div class="a" style="left:500px;top:189px;width:105px;height:28px;background:#c3e287;box-shadow:inset 1px 1px 0 #9cbf6a;color:#151515;font-size:16px;overflow:visible"><div style="position:absolute;left:0;right:0;top:50%;transform:translateY(calc(-50% - 1px));line-height:28px;text-align:left;padding-left:6px;white-space:nowrap"></div></div>
<div class="a" style="left:606px;top:189px;width:121px;height:28px;background:#c3e287;box-shadow:inset 1px 1px 0 #9cbf6a;color:#151515;font-size:16px;overflow:visible"><div style="position:absolute;left:0;right:0;top:50%;transform:translateY(calc(-50% - 1px));line-height:28px;text-align:center;white-space:nowrap">生产部门</div></div>
<div class="a" style="left:728px;top:189px;width:141px;height:28px;background:#c3e287;box-shadow:inset 1px 1px 0 #9cbf6a;color:#151515;font-size:16px;overflow:visible"><div style="position:absolute;left:0;right:0;top:50%;transform:translateY(calc(-50% - 1px));line-height:28px;text-align:center;white-space:nowrap">研究开发部门</div></div>
<div class="a" style="left:500px;top:218px;width:105px;height:24px;background:#f3f3f3;box-shadow:inset 1px 1px 0 #c4dca8;color:#151515;font-size:16px;overflow:visible"><div style="position:absolute;left:0;right:0;top:50%;transform:translateY(calc(-50% - 1px));line-height:24px;text-align:left;padding-left:6px;white-space:nowrap">期初人员</div></div>
<div class="a" style="left:606px;top:218px;width:121px;height:24px;background:#f3f3f3;box-shadow:inset 1px 1px 0 #c4dca8;color:#151515;font-size:16px;overflow:visible"><div style="position:absolute;left:0;right:0;top:50%;transform:translateY(calc(-50% - 1px));line-height:24px;text-align:center;white-space:nowrap">0</div></div>
<div class="a" style="left:728px;top:218px;width:141px;height:24px;background:#f3f3f3;box-shadow:inset 1px 1px 0 #c4dca8;color:#151515;font-size:16px;overflow:visible"><div style="position:absolute;left:0;right:0;top:50%;transform:translateY(calc(-50% - 1px));line-height:24px;text-align:center;white-space:nowrap">0</div></div>
<div class="a" style="left:500px;top:243px;width:105px;height:25px;background:#f3f3f3;box-shadow:inset 1px 1px 0 #c4dca8;color:#151515;font-size:16px;overflow:visible"><div style="position:absolute;left:0;right:0;top:50%;transform:translateY(calc(-50% - 1px));line-height:25px;text-align:left;padding-left:6px;white-space:nowrap">&nbsp;&nbsp;+招&nbsp;&nbsp;聘</div></div>
<div class="a" style="left:606px;top:243px;width:121px;height:25px;background:#f3f3f3;box-shadow:inset 1px 1px 0 #c4dca8;color:#151515;font-size:16px;overflow:visible"><div style="position:absolute;left:0;right:0;top:50%;transform:translateY(calc(-50% - 1px));line-height:25px;text-align:center;white-space:nowrap">120</div></div>
<div class="a" style="left:728px;top:243px;width:141px;height:25px;background:#f3f3f3;box-shadow:inset 1px 1px 0 #c4dca8;color:#151515;font-size:16px;overflow:visible"><div style="position:absolute;left:0;right:0;top:50%;transform:translateY(calc(-50% - 1px));line-height:25px;text-align:center;white-space:nowrap">10</div></div>
<div class="a" style="left:500px;top:269px;width:105px;height:25px;background:#f3f3f3;box-shadow:inset 1px 1px 0 #c4dca8;color:#151515;font-size:16px;overflow:visible"><div style="position:absolute;left:0;right:0;top:50%;transform:translateY(calc(-50% - 1px));line-height:25px;text-align:left;padding-left:6px;white-space:nowrap">&nbsp;&nbsp;- 解&nbsp;&nbsp;雇</div></div>
<div class="a" style="left:606px;top:269px;width:121px;height:25px;background:#f3f3f3;box-shadow:inset 1px 1px 0 #c4dca8;color:#151515;font-size:16px;overflow:visible"><div style="position:absolute;left:0;right:0;top:50%;transform:translateY(calc(-50% - 1px));line-height:25px;text-align:center;white-space:nowrap">0</div></div>
<div class="a" style="left:728px;top:269px;width:141px;height:25px;background:#f3f3f3;box-shadow:inset 1px 1px 0 #c4dca8;color:#151515;font-size:16px;overflow:visible"><div style="position:absolute;left:0;right:0;top:50%;transform:translateY(calc(-50% - 1px));line-height:25px;text-align:center;white-space:nowrap">0</div></div>
<div class="a" style="left:500px;top:295px;width:105px;height:25px;background:#f3f3f3;box-shadow:inset 1px 1px 0 #c4dca8;color:#151515;font-size:16px;overflow:visible"><div style="position:absolute;left:0;right:0;top:50%;transform:translateY(calc(-50% - 1px));line-height:25px;text-align:left;padding-left:6px;white-space:nowrap">&nbsp;&nbsp;- 流&nbsp;&nbsp;动</div></div>
<div class="a" style="left:606px;top:295px;width:121px;height:25px;background:#f3f3f3;box-shadow:inset 1px 1px 0 #c4dca8;color:#151515;font-size:16px;overflow:visible"><div style="position:absolute;left:0;right:0;top:50%;transform:translateY(calc(-50% - 1px));line-height:25px;text-align:center;white-space:nowrap">0</div></div>
<div class="a" style="left:728px;top:295px;width:141px;height:25px;background:#f3f3f3;box-shadow:inset 1px 1px 0 #c4dca8;color:#151515;font-size:16px;overflow:visible"><div style="position:absolute;left:0;right:0;top:50%;transform:translateY(calc(-50% - 1px));line-height:25px;text-align:center;white-space:nowrap">---</div></div>
<div class="a" style="left:500px;top:321px;width:105px;height:22px;background:#f3f3f3;box-shadow:inset 1px 1px 0 #c4dca8;color:#151515;font-size:16px;overflow:visible"><div style="position:absolute;left:0;right:0;top:50%;transform:translateY(calc(-50% - 1px));line-height:22px;text-align:left;padding-left:6px;white-space:nowrap">=期末人员</div></div>
<div class="a" style="left:606px;top:321px;width:121px;height:22px;background:#f3f3f3;box-shadow:inset 1px 1px 0 #c4dca8;color:#151515;font-size:16px;overflow:visible"><div style="position:absolute;left:0;right:0;top:50%;transform:translateY(calc(-50% - 1px));line-height:22px;text-align:center;white-space:nowrap">120</div></div>
<div class="a" style="left:728px;top:321px;width:141px;height:22px;background:#f3f3f3;box-shadow:inset 1px 1px 0 #c4dca8;color:#151515;font-size:16px;overflow:visible"><div style="position:absolute;left:0;right:0;top:50%;transform:translateY(calc(-50% - 1px));line-height:22px;text-align:center;white-space:nowrap">10</div></div>
<div class="a" style="left:882px;top:156px;width:372px;height:190px;background:#5f8a2a"></div>
<div class="a" style="left:884px;top:158px;width:369px;height:30px;background:#7a9d3a;box-shadow:inset 1px 1px 0 #9cbf6a;color:#eef6e2;font-size:16px;overflow:visible"><div style="position:absolute;left:0;right:0;top:50%;transform:translateY(calc(-50% - 1px));line-height:30px;text-align:left;padding-left:6px;white-space:nowrap">人员报告II</div></div>
<div class="a" style="left:884px;top:189px;width:180px;height:28px;background:#c3e287;box-shadow:inset 1px 1px 0 #9cbf6a;color:#151515;font-size:16px;overflow:visible"><div style="position:absolute;left:0;right:0;top:50%;transform:translateY(calc(-50% - 1px));line-height:28px;text-align:center;white-space:nowrap">部&nbsp;&nbsp;门</div></div>
<div class="a" style="left:1065px;top:189px;width:188px;height:28px;background:#c3e287;box-shadow:inset 1px 1px 0 #9cbf6a;color:#151515;font-size:16px;overflow:visible"><div style="position:absolute;left:0;right:0;top:50%;transform:translateY(calc(-50% - 1px));line-height:28px;text-align:center;white-space:nowrap">人&nbsp;&nbsp;员(个)</div></div>
<div class="a" style="left:884px;top:218px;width:180px;height:30px;background:#f3f3f3;box-shadow:inset 1px 1px 0 #c4dca8;color:#151515;font-size:16px;overflow:visible"><div style="position:absolute;left:0;right:0;top:50%;transform:translateY(calc(-50% - 1px));line-height:30px;text-align:left;padding-left:6px;white-space:nowrap">销&nbsp;&nbsp;售</div></div>
<div class="a" style="left:1065px;top:218px;width:188px;height:30px;background:#f3f3f3;box-shadow:inset 1px 1px 0 #c4dca8;color:#151515;font-size:16px;overflow:visible"><div style="position:absolute;left:0;right:0;top:50%;transform:translateY(calc(-50% - 1px));line-height:30px;text-align:center;white-space:nowrap">55</div></div>
<div class="a" style="left:884px;top:249px;width:180px;height:32px;background:#f3f3f3;box-shadow:inset 1px 1px 0 #c4dca8;color:#151515;font-size:16px;overflow:visible"><div style="position:absolute;left:0;right:0;top:50%;transform:translateY(calc(-50% - 1px));line-height:32px;text-align:left;padding-left:6px;white-space:nowrap">采&nbsp;&nbsp;购</div></div>
<div class="a" style="left:1065px;top:249px;width:188px;height:32px;background:#f3f3f3;box-shadow:inset 1px 1px 0 #c4dca8;color:#151515;font-size:16px;overflow:visible"><div style="position:absolute;left:0;right:0;top:50%;transform:translateY(calc(-50% - 1px));line-height:32px;text-align:center;white-space:nowrap">5</div></div>
<div class="a" style="left:884px;top:282px;width:180px;height:31px;background:#f3f3f3;box-shadow:inset 1px 1px 0 #c4dca8;color:#151515;font-size:16px;overflow:visible"><div style="position:absolute;left:0;right:0;top:50%;transform:translateY(calc(-50% - 1px));line-height:31px;text-align:left;padding-left:6px;white-space:nowrap">管&nbsp;&nbsp;理</div></div>
<div class="a" style="left:1065px;top:282px;width:188px;height:31px;background:#f3f3f3;box-shadow:inset 1px 1px 0 #c4dca8;color:#151515;font-size:16px;overflow:visible"><div style="position:absolute;left:0;right:0;top:50%;transform:translateY(calc(-50% - 1px));line-height:31px;text-align:center;white-space:nowrap">25</div></div>
<div class="a" style="left:884px;top:314px;width:180px;height:31px;background:#f3f3f3;box-shadow:inset 1px 1px 0 #c4dca8;color:#151515;font-size:16px;overflow:visible"><div style="position:absolute;left:0;right:0;top:50%;transform:translateY(calc(-50% - 1px));line-height:31px;text-align:left;padding-left:6px;white-space:nowrap">管理的合理化系数</div></div>
<div class="a" style="left:1065px;top:314px;width:188px;height:31px;background:#f3f3f3;box-shadow:inset 1px 1px 0 #c4dca8;color:#151515;font-size:16px;overflow:visible"><div style="position:absolute;left:0;right:0;top:50%;transform:translateY(calc(-50% - 1px));line-height:31px;text-align:center;white-space:nowrap">1</div></div>
<div class="a" style="left:498px;top:362px;width:372px;height:193px;background:#5f8a2a"></div>
<div class="a" style="left:500px;top:364px;width:369px;height:31px;background:#7a9d3a;box-shadow:inset 1px 1px 0 #9cbf6a;color:#eef6e2;font-size:16px;overflow:visible"><div style="position:absolute;left:0;right:0;top:50%;transform:translateY(calc(-50% - 1px));line-height:31px;text-align:left;padding-left:6px;white-space:nowrap">生产报告I</div></div>
<div class="a" style="left:500px;top:396px;width:104px;height:39px;background:#c3e287;box-shadow:inset 1px 1px 0 #9cbf6a;color:#151515;font-size:16px;overflow:visible"><div style="position:absolute;left:0;right:0;top:50%;transform:translateY(calc(-50% - 1px));line-height:39px;text-align:left;padding-left:6px;white-space:nowrap"></div></div>
<div class="a" style="left:605px;top:396px;width:119px;height:39px;background:#c3e287;box-shadow:inset 1px 1px 0 #9cbf6a;color:#151515;font-size:16px;overflow:visible"><div style="position:absolute;left:0;right:0;top:50%;transform:translateY(calc(-50% - 1px));line-height:18px;text-align:center;white-space:nowrap">生产线<br>(条)</div></div>
<div class="a" style="left:725px;top:396px;width:144px;height:39px;background:#c3e287;box-shadow:inset 1px 1px 0 #9cbf6a;color:#151515;font-size:16px;overflow:visible"><div style="position:absolute;left:0;right:0;top:50%;transform:translateY(calc(-50% - 1px));line-height:18px;text-align:center;white-space:nowrap">机器人<br>(个)</div></div>
<div class="a" style="left:500px;top:436px;width:104px;height:27px;background:#f3f3f3;box-shadow:inset 1px 1px 0 #c4dca8;color:#151515;font-size:16px;overflow:visible"><div style="position:absolute;left:0;right:0;top:50%;transform:translateY(calc(-50% - 1px));line-height:27px;text-align:left;padding-left:6px;white-space:nowrap">前周期</div></div>
<div class="a" style="left:605px;top:436px;width:119px;height:27px;background:#f3f3f3;box-shadow:inset 1px 1px 0 #c4dca8;color:#151515;font-size:16px;overflow:visible"><div style="position:absolute;left:0;right:0;top:50%;transform:translateY(calc(-50% - 1px));line-height:27px;text-align:center;white-space:nowrap">0</div></div>
<div class="a" style="left:725px;top:436px;width:144px;height:27px;background:#f3f3f3;box-shadow:inset 1px 1px 0 #c4dca8;color:#151515;font-size:16px;overflow:visible"><div style="position:absolute;left:0;right:0;top:50%;transform:translateY(calc(-50% - 1px));line-height:27px;text-align:center;white-space:nowrap">0</div></div>
<div class="a" style="left:500px;top:464px;width:104px;height:28px;background:#f3f3f3;box-shadow:inset 1px 1px 0 #c4dca8;color:#151515;font-size:16px;overflow:visible"><div style="position:absolute;left:0;right:0;top:50%;transform:translateY(calc(-50% - 1px));line-height:28px;text-align:left;padding-left:6px;white-space:nowrap">&nbsp;&nbsp;+投&nbsp;&nbsp;资</div></div>
<div class="a" style="left:605px;top:464px;width:119px;height:28px;background:#f3f3f3;box-shadow:inset 1px 1px 0 #c4dca8;color:#151515;font-size:16px;overflow:visible"><div style="position:absolute;left:0;right:0;top:50%;transform:translateY(calc(-50% - 1px));line-height:28px;text-align:center;white-space:nowrap">5</div></div>
<div class="a" style="left:725px;top:464px;width:144px;height:28px;background:#f3f3f3;box-shadow:inset 1px 1px 0 #c4dca8;color:#151515;font-size:16px;overflow:visible"><div style="position:absolute;left:0;right:0;top:50%;transform:translateY(calc(-50% - 1px));line-height:28px;text-align:center;white-space:nowrap">0</div></div>
<div class="a" style="left:500px;top:493px;width:104px;height:27px;background:#f3f3f3;box-shadow:inset 1px 1px 0 #c4dca8;color:#151515;font-size:16px;overflow:visible"><div style="position:absolute;left:0;right:0;top:50%;transform:translateY(calc(-50% - 1px));line-height:27px;text-align:left;padding-left:6px;white-space:nowrap">&nbsp;&nbsp;- 变&nbsp;&nbsp;卖</div></div>
<div class="a" style="left:605px;top:493px;width:119px;height:27px;background:#f3f3f3;box-shadow:inset 1px 1px 0 #c4dca8;color:#151515;font-size:16px;overflow:visible"><div style="position:absolute;left:0;right:0;top:50%;transform:translateY(calc(-50% - 1px));line-height:27px;text-align:center;white-space:nowrap">0</div></div>
<div class="a" style="left:725px;top:493px;width:144px;height:27px;background:#f3f3f3;box-shadow:inset 1px 1px 0 #c4dca8;color:#151515;font-size:16px;overflow:visible"><div style="position:absolute;left:0;right:0;top:50%;transform:translateY(calc(-50% - 1px));line-height:27px;text-align:center;white-space:nowrap">---</div></div>
<div class="a" style="left:500px;top:521px;width:104px;height:33px;background:#f3f3f3;box-shadow:inset 1px 1px 0 #c4dca8;color:#151515;font-size:16px;overflow:visible"><div style="position:absolute;left:0;right:0;top:50%;transform:translateY(calc(-50% - 1px));line-height:33px;text-align:left;padding-left:6px;white-space:nowrap">本周期</div></div>
<div class="a" style="left:605px;top:521px;width:119px;height:33px;background:#f3f3f3;box-shadow:inset 1px 1px 0 #c4dca8;color:#151515;font-size:16px;overflow:visible"><div style="position:absolute;left:0;right:0;top:50%;transform:translateY(calc(-50% - 1px));line-height:33px;text-align:center;white-space:nowrap">5</div></div>
<div class="a" style="left:725px;top:521px;width:144px;height:33px;background:#f3f3f3;box-shadow:inset 1px 1px 0 #c4dca8;color:#151515;font-size:16px;overflow:visible"><div style="position:absolute;left:0;right:0;top:50%;transform:translateY(calc(-50% - 1px));line-height:33px;text-align:center;white-space:nowrap">0</div></div>
<div class="a" style="left:882px;top:362px;width:372px;height:193px;background:#5f8a2a"></div>
<div class="a" style="left:884px;top:364px;width:369px;height:31px;background:#7a9d3a;box-shadow:inset 1px 1px 0 #9cbf6a;color:#eef6e2;font-size:16px;overflow:visible"><div style="position:absolute;left:0;right:0;top:50%;transform:translateY(calc(-50% - 1px));line-height:31px;text-align:left;padding-left:6px;white-space:nowrap">生产报告II</div></div>
<div class="a" style="left:884px;top:396px;width:86px;height:39px;background:#c3e287;box-shadow:inset 1px 1px 0 #9cbf6a;color:#151515;font-size:16px;overflow:visible"><div style="position:absolute;left:0;right:0;top:50%;transform:translateY(calc(-50% - 1px));line-height:39px;text-align:left;padding-left:6px;white-space:nowrap"></div></div>
<div class="a" style="left:971px;top:396px;width:76px;height:39px;background:#c3e287;box-shadow:inset 1px 1px 0 #9cbf6a;color:#151515;font-size:16px;overflow:visible"><div style="position:absolute;left:0;right:0;top:50%;transform:translateY(calc(-50% - 1px));line-height:18px;text-align:center;white-space:nowrap">加工<br>(台)</div></div>
<div class="a" style="left:1048px;top:396px;width:108px;height:39px;background:#c3e287;box-shadow:inset 1px 1px 0 #9cbf6a;color:#151515;font-size:16px;overflow:visible"><div style="position:absolute;left:0;right:0;top:50%;transform:translateY(calc(-50% - 1px));line-height:18px;text-align:center;white-space:nowrap">设备要求<br>(单位)</div></div>
<div class="a" style="left:1157px;top:396px;width:96px;height:39px;background:#c3e287;box-shadow:inset 1px 1px 0 #9cbf6a;color:#151515;font-size:16px;overflow:visible"><div style="position:absolute;left:0;right:0;top:50%;transform:translateY(calc(-50% - 1px));line-height:18px;text-align:center;white-space:nowrap">人员要求<br>(个)</div></div>
<div class="a" style="left:884px;top:436px;width:86px;height:27px;background:#f3f3f3;box-shadow:inset 1px 1px 0 #c4dca8;color:#151515;font-size:16px;overflow:visible"><div style="position:absolute;left:0;right:0;top:50%;transform:translateY(calc(-50% - 1px));line-height:27px;text-align:left;padding-left:6px;white-space:nowrap">一般产品</div></div>
<div class="a" style="left:971px;top:436px;width:76px;height:27px;background:#f3f3f3;box-shadow:inset 1px 1px 0 #c4dca8;color:#151515;font-size:16px;overflow:visible"><div style="position:absolute;left:0;right:0;top:50%;transform:translateY(calc(-50% - 1px));line-height:27px;text-align:center;white-space:nowrap">29475</div></div>
<div class="a" style="left:1048px;top:436px;width:108px;height:27px;background:#f3f3f3;box-shadow:inset 1px 1px 0 #c4dca8;color:#151515;font-size:16px;overflow:visible"><div style="position:absolute;left:0;right:0;top:50%;transform:translateY(calc(-50% - 1px));line-height:27px;text-align:center;white-space:nowrap">29475</div></div>
<div class="a" style="left:1157px;top:436px;width:96px;height:27px;background:#f3f3f3;box-shadow:inset 1px 1px 0 #c4dca8;color:#151515;font-size:16px;overflow:visible"><div style="position:absolute;left:0;right:0;top:50%;transform:translateY(calc(-50% - 1px));line-height:27px;text-align:center;white-space:nowrap">117.9</div></div>
<div class="a" style="left:884px;top:464px;width:86px;height:28px;background:#f3f3f3;box-shadow:inset 1px 1px 0 #c4dca8;color:#151515;font-size:16px;overflow:visible"><div style="position:absolute;left:0;right:0;top:50%;transform:translateY(calc(-50% - 1px));line-height:28px;text-align:left;padding-left:6px;white-space:nowrap">特殊产品</div></div>
<div class="a" style="left:971px;top:464px;width:76px;height:28px;background:#f3f3f3;box-shadow:inset 1px 1px 0 #c4dca8;color:#151515;font-size:16px;overflow:visible"><div style="position:absolute;left:0;right:0;top:50%;transform:translateY(calc(-50% - 1px));line-height:28px;text-align:center;white-space:nowrap">3000</div></div>
<div class="a" style="left:1048px;top:464px;width:108px;height:28px;background:#f3f3f3;box-shadow:inset 1px 1px 0 #c4dca8;color:#151515;font-size:16px;overflow:visible"><div style="position:absolute;left:0;right:0;top:50%;transform:translateY(calc(-50% - 1px));line-height:28px;text-align:center;white-space:nowrap">2700</div></div>
<div class="a" style="left:1157px;top:464px;width:96px;height:28px;background:#f3f3f3;box-shadow:inset 1px 1px 0 #c4dca8;color:#151515;font-size:16px;overflow:visible"><div style="position:absolute;left:0;right:0;top:50%;transform:translateY(calc(-50% - 1px));line-height:28px;text-align:center;white-space:nowrap">10.7</div></div>
<div class="a" style="left:884px;top:493px;width:86px;height:27px;background:#f3f3f3;box-shadow:inset 1px 1px 0 #c4dca8;color:#151515;font-size:16px;overflow:visible"><div style="position:absolute;left:0;right:0;top:50%;transform:translateY(calc(-50% - 1px));line-height:27px;text-align:left;padding-left:6px;white-space:nowrap">合&nbsp;&nbsp;&nbsp;&nbsp;&nbsp;计</div></div>
<div class="a" style="left:971px;top:493px;width:76px;height:27px;background:#f3f3f3;box-shadow:inset 1px 1px 0 #c4dca8;color:#151515;font-size:16px;overflow:visible"><div style="position:absolute;left:0;right:0;top:50%;transform:translateY(calc(-50% - 1px));line-height:27px;text-align:center;white-space:nowrap">32475</div></div>
<div class="a" style="left:1048px;top:493px;width:108px;height:27px;background:#f3f3f3;box-shadow:inset 1px 1px 0 #c4dca8;color:#151515;font-size:16px;overflow:visible"><div style="position:absolute;left:0;right:0;top:50%;transform:translateY(calc(-50% - 1px));line-height:27px;text-align:center;white-space:nowrap">32175</div></div>
<div class="a" style="left:1157px;top:493px;width:96px;height:27px;background:#f3f3f3;box-shadow:inset 1px 1px 0 #c4dca8;color:#151515;font-size:16px;overflow:visible"><div style="position:absolute;left:0;right:0;top:50%;transform:translateY(calc(-50% - 1px));line-height:27px;text-align:center;white-space:nowrap">129</div></div>
<div class="a" style="left:884px;top:521px;width:86px;height:33px;background:#f3f3f3;box-shadow:inset 1px 1px 0 #c4dca8;color:#151515;font-size:16px;overflow:visible"><div style="position:absolute;left:0;right:0;top:50%;transform:translateY(calc(-50% - 1px));line-height:33px;text-align:left;padding-left:6px;white-space:nowrap">负载率(%)</div></div>
<div class="a" style="left:971px;top:521px;width:76px;height:33px;background:#f3f3f3;box-shadow:inset 1px 1px 0 #c4dca8;color:#151515;font-size:16px;overflow:visible"><div style="position:absolute;left:0;right:0;top:50%;transform:translateY(calc(-50% - 1px));line-height:33px;text-align:center;white-space:nowrap">---</div></div>
<div class="a" style="left:1048px;top:521px;width:108px;height:33px;background:#f3f3f3;box-shadow:inset 1px 1px 0 #c4dca8;color:#151515;font-size:16px;overflow:visible"><div style="position:absolute;left:0;right:0;top:50%;transform:translateY(calc(-50% - 1px));line-height:33px;text-align:center;white-space:nowrap">110</div></div>
<div class="a" style="left:1157px;top:521px;width:96px;height:33px;background:#f3f3f3;box-shadow:inset 1px 1px 0 #c4dca8;color:#151515;font-size:16px;overflow:visible"><div style="position:absolute;left:0;right:0;top:50%;transform:translateY(calc(-50% - 1px));line-height:33px;text-align:center;white-space:nowrap">107.3</div></div>
<div class="a" style="left:498px;top:575px;width:756px;height:133px;background:#5f8a2a"></div>
<div class="a" style="left:500px;top:577px;width:753px;height:30px;background:#7a9d3a;box-shadow:inset 1px 1px 0 #9cbf6a;color:#eef6e2;font-size:16px;overflow:visible"><div style="position:absolute;left:0;right:0;top:50%;transform:translateY(calc(-50% - 1px));line-height:30px;text-align:left;padding-left:6px;white-space:nowrap">生产报告III</div></div>
<div class="a" style="left:500px;top:608px;width:236px;height:33px;background:#f3f3f3;box-shadow:inset 1px 1px 0 #c4dca8;color:#151515;font-size:16px;overflow:visible"><div style="position:absolute;left:0;right:0;top:50%;transform:translateY(calc(-50% - 1px));line-height:33px;text-align:left;padding-left:6px;white-space:nowrap">生产线的合理化系数</div></div>
<div class="a" style="left:737px;top:608px;width:516px;height:33px;background:#f3f3f3;box-shadow:inset 1px 1px 0 #c4dca8;color:#151515;font-size:16px;overflow:visible"><div style="position:absolute;left:0;right:0;top:50%;transform:translateY(calc(-50% - 1px));line-height:33px;text-align:center;white-space:nowrap">1</div></div>
<div class="a" style="left:500px;top:642px;width:236px;height:32px;background:#f3f3f3;box-shadow:inset 1px 1px 0 #c4dca8;color:#151515;font-size:16px;overflow:visible"><div style="position:absolute;left:0;right:0;top:50%;transform:translateY(calc(-50% - 1px));line-height:32px;text-align:left;padding-left:6px;white-space:nowrap">生产线维修保养系数</div></div>
<div class="a" style="left:737px;top:642px;width:516px;height:32px;background:#f3f3f3;box-shadow:inset 1px 1px 0 #c4dca8;color:#151515;font-size:16px;overflow:visible"><div style="position:absolute;left:0;right:0;top:50%;transform:translateY(calc(-50% - 1px));line-height:32px;text-align:center;white-space:nowrap">0.9</div></div>
<div class="a" style="left:500px;top:675px;width:236px;height:32px;background:#f3f3f3;box-shadow:inset 1px 1px 0 #c4dca8;color:#151515;font-size:16px;overflow:visible"><div style="position:absolute;left:0;right:0;top:50%;transform:translateY(calc(-50% - 1px));line-height:32px;text-align:left;padding-left:6px;white-space:nowrap">生产线负载率100%时生产能力</div></div>
<div class="a" style="left:737px;top:675px;width:516px;height:32px;background:#f3f3f3;box-shadow:inset 1px 1px 0 #c4dca8;color:#151515;font-size:16px;overflow:visible"><div style="position:absolute;left:0;right:0;top:50%;transform:translateY(calc(-50% - 1px));line-height:32px;text-align:center;white-space:nowrap">29250</div></div>
<div class="a" style="left:733px;top:739px;width:40px;height:20px;font-size:16px;color:#a3272a;line-height:20px;white-space:nowrap">首页</div>
<div class="a" style="left:822px;top:739px;width:40px;height:20px;font-size:16px;color:#a3272a;line-height:20px;white-space:nowrap">上页</div>
<div class="a" style="left:911px;top:739px;width:40px;height:20px;font-size:16px;color:#a3272a;line-height:20px;white-space:nowrap">下页</div>
<div class="a" style="left:1000px;top:739px;width:40px;height:20px;font-size:16px;color:#a3272a;line-height:20px;white-space:nowrap">尾页</div>
<div class="a" style="left:429px;top:786px;width:903px;height:31px;background:#6db322"></div>
<div class="a" style="left:605px;top:790px;width:80px;height:20px;font-size:16px;color:#161616;line-height:20px;white-space:nowrap">首页</div>
<div class="a" style="left:659px;top:790px;width:80px;height:20px;font-size:16px;color:#161616;line-height:20px;white-space:nowrap">创业导航</div>
<div class="a" style="left:745px;top:790px;width:80px;height:20px;font-size:16px;color:#161616;line-height:20px;white-space:nowrap">创业原理</div>
<div class="a" style="left:834px;top:790px;width:80px;height:20px;font-size:16px;color:#161616;line-height:20px;white-space:nowrap">使用手册</div>
<div class="a" style="left:920px;top:790px;width:80px;height:20px;font-size:16px;color:#161616;line-height:20px;white-space:nowrap">创业流程</div>
<div class="a" style="left:1007px;top:790px;width:80px;height:20px;font-size:16px;color:#161616;line-height:20px;white-space:nowrap">决策仿真</div>
<div class="a" style="left:1093px;top:790px;width:80px;height:20px;font-size:16px;color:#161616;line-height:20px;white-space:nowrap">教学大纲</div>
<div class="a" style="left:429px;top:817px;width:903px;height:64px;background:#cfcfcf"></div>
<div class="a" style="left:511px;top:829px;width:740px;height:18px;font-size:16px;color:#151515;line-height:18px;white-space:nowrap;letter-spacing:0.1px">本系统版权属东华大学旭日工商管理学院信息管理研究所宋福根教授所有，未经许可不得转载或建立镜像</div>
<div class="a" style="left:511px;top:847px;width:740px;height:18px;font-size:16px;color:#151515;line-height:18px;white-space:nowrap;letter-spacing:0.02px">地址：上海市延安西路1882号&nbsp;&nbsp;邮编：200051&nbsp;联系电话：021－62373974 E-mail：&nbsp;&nbsp;fgsong@dhu.edu.cn</div>
</div>
<div class="a" style="left:1782px;top:60px;width:378px;height:1215px;background:linear-gradient(180deg,#000 0px,rgba(8,8,9,0.95) 50px,rgba(20,21,23,0.6) 120px,rgba(20,21,23,0) 230px),linear-gradient(0deg,rgba(20,21,23,0.9) 0px,rgba(20,21,23,0.5) 60px,rgba(20,21,23,0) 260px),linear-gradient(90deg,rgba(34,35,38,0) 0px,rgba(34,35,38,0.35) 60px,rgba(34,35,38,0.85) 180px,#222326 260px),#4e5155"></div>
<div class="a" style="left:1782px;top:60px;width:3px;height:1215px;background:#1b1c1e"></div>
<div class="a" style="left:1795px;top:196px;width:353px;height:199px;background:linear-gradient(180deg,#121315 0%,#1b1c1e 45%,#222326 100%);border:1px solid #45484c;border-radius:4px"></div>
<div class="a" style="left:1795px;top:408px;width:353px;height:199px;background:#222326;border:1px solid #5a5d61;border-radius:4px"></div>
<div class="a" style="left:1795px;top:621px;width:353px;height:199px;background:#222326;border:1px solid #5a5d61;border-radius:4px"></div>
<div class="a" style="left:1795px;top:833px;width:353px;height:199px;background:#222326;border:1px solid #54575b;border-radius:4px"></div>
<div class="a" style="left:1795px;top:1046px;width:353px;height:199px;background:linear-gradient(180deg,#202124 0%,#1a1a1c 60%,#131415 100%);border:1px solid #45484c;border-radius:4px"></div>
<svg class="a" style="left:1922px;top:235px;" width="98" height="98" viewBox="0 0 98 98"><defs><clipPath id="c1"><circle cx="49" cy="49" r="49"/></clipPath></defs><g clip-path="url(#c1)"><defs><linearGradient id="sky1" x1="0" y1="0" x2="0" y2="1"><stop offset="0" stop-color="#1e1e3c"/><stop offset="0.3" stop-color="#3a3462"/><stop offset="0.45" stop-color="#4a3e6a"/><stop offset="0.48" stop-color="#8a5a6a"/><stop offset="0.52" stop-color="#2e3a5a"/><stop offset="1" stop-color="#1a2440"/></linearGradient></defs><rect width="98" height="98" fill="url(#sky1)"/><path d="M6 36 Q49 -2 94 36" fill="none" stroke="#7a6a98" stroke-width="9" opacity="0.35"/><path d="M40 48 L60 46 L80 40 L98 36 L98 70 L80 76 L70 66 L58 54Z" fill="#4a3a38"/><path d="M20 98 L40 84 L60 88 L80 76 L98 74 L98 98Z" fill="#5a4440"/><path d="M38 46h10v4H38z" fill="#2a2228"/></g></svg>
<svg class="a" style="left:1922px;top:448px;" width="98" height="98" viewBox="0 0 98 98"><defs><clipPath id="c2"><circle cx="49" cy="49" r="49"/></clipPath></defs><g clip-path="url(#c2)"><rect width="98" height="98" fill="#000"/><rect x="0" y="31" width="98" height="38" fill="#c8c3be"/><rect x="0" y="31" width="60" height="38" fill="#6e6b68"/><path d="M8 35 a10 10 0 1 0 0.1 0" fill="#d8d8d0"/><ellipse cx="30" cy="50" rx="12" ry="16" fill="#bdb8b2"/><path d="M42 31h16l4 38H50z" fill="#141414"/><path d="M0 31h10v38H0z" fill="#2a2a2a"/></g></svg>
<svg class="a" style="left:1922px;top:661px;" width="98" height="98" viewBox="0 0 98 98"><defs><clipPath id="c3"><circle cx="49" cy="49" r="49"/></clipPath></defs><g clip-path="url(#c3)"><rect width="98" height="98" fill="#d9d6d2"/><path d="M0 0H98V40Q70 20 30 28L0 40Z" fill="#151515"/><path d="M70 0H98V60H86Z" fill="#c9cdd2"/><path d="M80 8 L86 0 L92 40 L84 44Z" fill="#3a3a3a"/><rect x="18" y="30" width="80" height="36" rx="10" fill="#dcdcdc" stroke="#0e0e0e" stroke-width="6"/><rect x="22" y="34" width="40" height="10" fill="#111"/><rect x="60" y="34" width="24" height="28" fill="#e2dcd4"/><ellipse cx="63" cy="46" rx="12" ry="7" fill="#151a2a"/><ellipse cx="64" cy="58" rx="11" ry="6" fill="#efe6de"/><circle cx="65" cy="57" r="2" fill="#e8a030"/><circle cx="57" cy="59" r="2" fill="#f0b0b0"/><circle cx="73" cy="59" r="2" fill="#f0b0b0"/><rect x="78" y="34" width="14" height="28" rx="3" fill="#1a1a1a"/><path d="M0 42 Q10 36 22 40 L30 50 L44 72 L46 98 H0Z" fill="#ebe6dd"/><rect x="44" y="70" width="54" height="28" fill="#c8c8cc"/><rect x="50" y="74" width="22" height="8" fill="#8aa0b0"/><rect x="74" y="86" width="10" height="8" fill="#e03040"/></g></svg>
<svg class="a" style="left:1922px;top:873px;" width="98" height="98" viewBox="0 0 98 98"><defs><clipPath id="c4"><circle cx="49" cy="49" r="49"/></clipPath></defs><g clip-path="url(#c4)"><defs><linearGradient id="w4" x1="0" y1="0" x2="1" y2="1"><stop offset="0" stop-color="#6e5e4e"/><stop offset="1" stop-color="#857363"/></linearGradient></defs><rect width="98" height="98" fill="url(#w4)"/><rect x="28" y="38" width="36" height="56" fill="#2e2a24" stroke="#5a4838" stroke-width="2"/><rect x="31" y="41" width="30" height="50" fill="#2e6a52"/><circle cx="40" cy="52" r="6" fill="#e07040"/><path d="M31 64 Q40 58 46 66 L46 91 H31Z" fill="#6a6aa0"/><path d="M46 46 L56 46 L58 91 L46 91Z" fill="#1e1a18"/><circle cx="51" cy="47" r="4" fill="#c83a2a"/><path d="M50 60 L58 60 L60 80 L50 82Z" fill="#c8a848"/><path d="M70 6 L76 4 L78 56 L72 58Z" fill="#d8b8a0"/><path d="M86 10 L92 12 L96 44 L90 46Z" fill="#d0b098"/><circle cx="90" cy="58" r="13" fill="#1e1a1a"/><path d="M70 62 Q85 60 98 66 V98 H72Z" fill="#5a4a3e"/></g></svg>
<svg class="a" style="left:1922px;top:1086px;" width="98" height="98" viewBox="0 0 98 98"><defs><clipPath id="c5"><circle cx="49" cy="49" r="49"/></clipPath></defs><g clip-path="url(#c5)"><defs><linearGradient id="sky5" x1="0" y1="0" x2="0" y2="1"><stop offset="0" stop-color="#2c64b4"/><stop offset="0.65" stop-color="#4a84cc"/></linearGradient></defs><rect width="98" height="98" fill="url(#sky5)"/><path d="M26 32 Q36 18 56 20 Q70 14 80 22 L60 30 Q44 36 26 36Z" fill="#e6ecf4"/><path d="M58 18 Q68 10 80 14 L76 20 L60 22Z" fill="#f2f4f8"/><ellipse cx="44" cy="43" rx="8" ry="4" fill="#e0e8f0"/><path d="M0 56 Q20 48 36 54 L60 52 L66 62 L0 66Z" fill="#e4eaf2"/><path d="M56 52 Q66 30 84 34 Q98 40 98 60 V84 L58 80Z" fill="#243a22"/><path d="M0 66 L52 64 L52 80 L0 86Z" fill="#2c4a26"/><path d="M0 80 L50 78 L40 98 H0Z" fill="#3a5a2c"/><path d="M40 98 L52 76 L62 74 L98 72 V98Z" fill="#4a5058"/><path d="M62 74 L98 66 V74 L64 78Z" fill="#2a3a28"/><path d="M58 82 L60 98" stroke="#ddd" stroke-width="1.5"/><path d="M10 20 V80 M18 26 V80" stroke="#3a4048" stroke-width="1.6"/><path d="M50 38 V94 M50 38 Q58 32 70 34" fill="none" stroke="#c8c8c8" stroke-width="1.4"/><path d="M69 30 l8 0 l-4 7z" fill="#d03030"/></g></svg>
<div class="a" style="left:1797px;top:362px;width:82px;height:30px;background:#0b0c0c"></div>
<svg class="a" style="left:1804px;top:365px;" width="24" height="24" viewBox="0 0 24 24"><rect x="8" y="2" width="8" height="14" rx="4" fill="#fff"/><path d="M5 11a7 7 0 0 0 14 0" fill="none" stroke="#fff" stroke-width="2"/><path d="M12 18v4M8 22h8" stroke="#fff" stroke-width="2"/><path d="M4 22L20 4" stroke="#1b1b1b" stroke-width="4"/><path d="M4 22L20 4" stroke="#e8473a" stroke-width="2"/></svg>
<div class="t" style="left:1833px;top:366px;font-size:17px;color:#fff;line-height:22px">www</div>
<div class="a" style="left:1797px;top:575px;width:160px;height:30px;background:#0b0c0c"></div>
<svg class="a" style="left:1804px;top:578px;" width="24" height="24" viewBox="0 0 24 24"><rect x="8" y="2" width="8" height="14" rx="4" fill="#fff"/><path d="M5 11a7 7 0 0 0 14 0" fill="none" stroke="#fff" stroke-width="2"/><path d="M12 18v4M8 22h8" stroke="#fff" stroke-width="2"/></svg>
<div class="t" style="left:1833px;top:579px;font-size:17px;color:#fff;line-height:22px">财管1912周泽文</div>
<div class="a" style="left:1797px;top:787px;width:63px;height:30px;background:#0b0c0c"></div>
<svg class="a" style="left:1804px;top:790px;" width="24" height="24" viewBox="0 0 24 24"><rect x="8" y="2" width="8" height="14" rx="4" fill="#fff"/><path d="M5 11a7 7 0 0 0 14 0" fill="none" stroke="#fff" stroke-width="2"/><path d="M12 18v4M8 22h8" stroke="#fff" stroke-width="2"/><path d="M4 22L20 4" stroke="#1b1b1b" stroke-width="4"/><path d="M4 22L20 4" stroke="#e8473a" stroke-width="2"/></svg>
<div class="t" style="left:1833px;top:791px;font-size:17px;color:#fff;line-height:22px">ioi</div>
<div class="a" style="left:1797px;top:1000px;width:80px;height:30px;background:#0b0c0c"></div>
<svg class="a" style="left:1804px;top:1003px;" width="24" height="24" viewBox="0 0 24 24"><rect x="8" y="2" width="8" height="14" rx="4" fill="#fff"/><path d="M5 11a7 7 0 0 0 14 0" fill="none" stroke="#fff" stroke-width="2"/><path d="M12 18v4M8 22h8" stroke="#fff" stroke-width="2"/><path d="M4 22L20 4" stroke="#1b1b1b" stroke-width="4"/><path d="M4 22L20 4" stroke="#e8473a" stroke-width="2"/></svg>
<div class="t" style="left:1833px;top:1004px;font-size:17px;color:#fff;line-height:22px">ccqr</div>
<div class="a" style="left:1797px;top:1213px;width:102px;height:30px;background:#0b0c0c"></div>
<svg class="a" style="left:1804px;top:1216px;" width="24" height="24" viewBox="0 0 24 24"><rect x="8" y="2" width="8" height="14" rx="4" fill="#9a9a9a"/><path d="M5 11a7 7 0 0 0 14 0" fill="none" stroke="#9a9a9a" stroke-width="2"/><path d="M12 18v4M8 22h8" stroke="#9a9a9a" stroke-width="2"/><path d="M4 22L20 4" stroke="#1b1b1b" stroke-width="4"/><path d="M4 22L20 4" stroke="#e8473a" stroke-width="2"/></svg>
<div class="t" style="left:1833px;top:1217px;font-size:17px;color:#9c9c9c;line-height:22px">Robert°</div>
<div class="a" style="left:1830px;top:147px;width:330px;height:53px;background:#3a3d41"></div>
<div class="t" style="left:1848px;top:163px;font-size:18px;color:#fff;line-height:22px">正在讲话: 宋福根;</div>
<svg class="a" style="left:2030px;top:152px;" width="80" height="44" viewBox="0 0 80 44"><defs><linearGradient id="lg2030" x1="0" y1="0" x2="1" y2="1"><stop offset="0" stop-color="#8a8e93"/><stop offset="1" stop-color="#5a5e63"/></linearGradient></defs><g transform="scale(1.0)" opacity="0.6"><path d="M9 32 L25 13 L37 25" fill="none" stroke="url(#lg2030)" stroke-width="13" stroke-linecap="round" stroke-linejoin="round"/><path d="M33 32 L49 13 L66 32" fill="none" stroke="url(#lg2030)" stroke-width="13" stroke-linecap="round" stroke-linejoin="round"/></g></svg>
<div class="a" style="left:2143px;top:1194px;width:15px;height:81px;border:2px solid #6a6d70;border-radius:5px;background:#111"></div>
<svg class="a" style="left:2147px;top:1238px;" width="9" height="37" viewBox="0 0 9 37"><rect x="0" y="0" width="9" height="2" fill="#3ddc5a"/><rect x="0" y="4" width="9" height="2" fill="#3ddc5a"/><rect x="0" y="8" width="9" height="2" fill="#3ddc5a"/><rect x="0" y="12" width="9" height="2" fill="#3ddc5a"/><rect x="0" y="16" width="9" height="2" fill="#3ddc5a"/><rect x="0" y="20" width="9" height="2" fill="#3ddc5a"/><rect x="0" y="24" width="9" height="2" fill="#3ddc5a"/><rect x="0" y="28" width="9" height="2" fill="#3ddc5a"/><rect x="0" y="32" width="9" height="2" fill="#3ddc5a"/></svg>
<div class="a" style="left:798px;top:163px;width:186px;height:25px;background:#676b71;border-radius:0 0 5px 5px;box-shadow:0 1px 2px rgba(0,0,0,0.2)"></div>
<svg class="a" style="left:806px;top:168px;" width="18" height="16" viewBox="0 0 18 16"><rect x="0" y="9" width="3" height="6" fill="#2ecc55"/><rect x="5" y="6" width="3" height="9" fill="#2ecc55"/><rect x="10" y="3" width="3" height="12" fill="#2ecc55"/><rect x="15" y="0" width="3" height="15" fill="#27a848" opacity="0.7"/></svg>
<svg class="a" style="left:828px;top:170px;" width="12" height="12" viewBox="0 0 12 12"><circle cx="6" cy="6" r="5.2" fill="#22c25a"/></svg>
<div class="t" style="left:846px;top:166px;font-size:15px;color:#cfd0d2;line-height:20px">腾讯会议</div>
<svg class="a" style="left:912px;top:169px;" width="14" height="14" viewBox="0 0 14 14"><circle cx="7" cy="7" r="6" fill="#b84a4a"/></svg>
<div class="t" style="left:930px;top:166px;font-size:15px;color:#cfd0d2;line-height:20px">录制中</div>
<div class="a" style="left:1523px;top:415px;width:259px;height:204px;background:#151618"></div>
<div class="a" style="left:1523px;top:415px;width:259px;height:45px;background:#3b3e42"></div>
<div class="t" style="left:1538px;top:428px;font-size:15px;color:#f4f4f4;line-height:20px">正在讲话: 宋福根;</div>
<svg class="a" style="left:1688px;top:421px;" width="60" height="33" viewBox="0 0 60 33"><defs><linearGradient id="lg1688" x1="0" y1="0" x2="1" y2="1"><stop offset="0" stop-color="#8a8e93"/><stop offset="1" stop-color="#5a5e63"/></linearGradient></defs><g transform="scale(0.75)" opacity="0.55"><path d="M9 32 L25 13 L37 25" fill="none" stroke="url(#lg1688)" stroke-width="13" stroke-linecap="round" stroke-linejoin="round"/><path d="M33 32 L49 13 L66 32" fill="none" stroke="url(#lg1688)" stroke-width="13" stroke-linecap="round" stroke-linejoin="round"/></g></svg>
<div class="a" style="left:1527px;top:463px;width:255px;height:145px;background:#232426"></div>
<svg class="a" style="left:1624px;top:491px;" width="72" height="72" viewBox="0 0 72 72"><defs><clipPath id="c9"><circle cx="36" cy="36" r="36"/></clipPath></defs><g clip-path="url(#c9)"><defs><radialGradient id="fl" cx="15%" cy="62%" r="70%"><stop offset="0" stop-color="#c06a30"/><stop offset="0.45" stop-color="#7a3020"/><stop offset="1" stop-color="#3a1410"/></radialGradient></defs><rect width="72" height="72" fill="url(#fl)"/><path d="M14 72 L22 40 L34 24 L40 8 L48 26 L60 30 L58 50 L56 72Z" fill="#2e6a2a"/><path d="M10 34 L28 60 L20 62Z M62 20 L48 56 L54 60Z M40 30 L44 72 L36 72Z" fill="#3f8a38"/><rect x="18" y="62" width="40" height="10" fill="#163826"/><circle cx="34" cy="68" r="2.5" fill="#2a6a9a"/><circle cx="42" cy="70" r="2.5" fill="#2a6a9a"/><circle cx="28" cy="9" r="5" fill="#eef4ee"/><circle cx="33" cy="15" r="5" fill="#e4ede4"/><circle cx="27" cy="20" r="4.5" fill="#f2f6f2"/><circle cx="45" cy="15" r="5" fill="#e8f0e8"/><circle cx="52" cy="18" r="5" fill="#f0f4f0"/><circle cx="48" cy="24" r="4" fill="#dfe8df"/><circle cx="32" cy="31" r="5" fill="#f0f6f0"/><circle cx="36" cy="36" r="4" fill="#e6eee6"/><circle cx="38" cy="48" r="6" fill="#f6f8f6"/><circle cx="32" cy="54" r="4" fill="#eaf0ea"/><circle cx="56" cy="42" r="5" fill="#eef4ee"/><circle cx="62" cy="48" r="4.5" fill="#e8f0e8"/><circle cx="58" cy="54" r="4" fill="#f0f4f0"/><circle cx="14" cy="54" r="5" fill="#eef2ee"/><circle cx="22" cy="58" r="5" fill="#f2f6f2"/><path d="M8 50 L18 66 L12 68Z" fill="#f2dcd8"/><ellipse cx="39" cy="51" rx="3" ry="4" fill="#e8c020"/><circle cx="27" cy="25" r="1.8" fill="#e0c030"/><circle cx="35" cy="32" r="1.8" fill="#e0c030"/><circle cx="26" cy="59" r="2" fill="#e8c020"/></g></svg>
<div class="a" style="left:1527px;top:584px;width:75px;height:24px;background:#0b0c0c"></div>
<svg class="a" style="left:1533px;top:587px;" width="18" height="18" viewBox="0 0 18 18"><rect x="6" y="1" width="6" height="11" rx="3" fill="#fff"/><path d="M3.5 8.5a5.5 5.5 0 0 0 11 0" fill="none" stroke="#fff" stroke-width="1.7"/><path d="M9 14v3M6 17h6" stroke="#fff" stroke-width="1.7"/></svg>
<div class="t" style="left:1555px;top:587px;font-size:14px;color:#fff;line-height:18px">宋福根</div>
<div class="a" style="left:1277px;top:665px;width:505px;height:397px;background:linear-gradient(180deg,#9fb8d3 0px,#b4c9df 30px,#c3d5e8 60px,#b9cde2 200px,#a8bfd8 397px);border:1px solid #3c4a5a;border-right:none;border-radius:6px 0 0 0"></div>
<svg class="a" style="left:1291px;top:676px;" width="18" height="22" viewBox="0 0 18 22"><rect x="1" y="1" width="15" height="19" rx="2" fill="#d7e6f5" stroke="#5a88b8"/><rect x="3" y="3" width="11" height="5" fill="#fff" stroke="#8ab"/><rect x="3" y="3" width="11" height="1.5" fill="#f29a22"/><rect x="3" y="10" width="2" height="2" fill="#4a8ac8"/><rect x="6" y="10" width="2" height="2" fill="#4a8ac8"/><rect x="9" y="10" width="2" height="2" fill="#4a8ac8"/><rect x="12" y="10" width="2" height="2" fill="#4a8ac8"/><rect x="3" y="13" width="2" height="2" fill="#4a8ac8"/><rect x="6" y="13" width="2" height="2" fill="#4a8ac8"/><rect x="9" y="13" width="2" height="2" fill="#4a8ac8"/><rect x="12" y="13" width="2" height="2" fill="#4a8ac8"/><rect x="3" y="16" width="2" height="2" fill="#4a8ac8"/><rect x="6" y="16" width="2" height="2" fill="#4a8ac8"/><rect x="9" y="16" width="2" height="2" fill="#4a8ac8"/><rect x="12" y="16" width="2" height="2" fill="#4a8ac8"/></svg>
<div class="t" style="left:1313px;top:678px;font-size:16px;color:#111;line-height:20px">计算器</div>
<div class="a" style="left:1668px;top:678px;width:38px;height:21px;background:linear-gradient(180deg,#e8eef5,#c9d6e4);border:1px solid #7a8a9c;border-radius:3px"></div>
<div class="a" style="left:1680px;top:688px;width:14px;height:4px;background:#fff;border:1px solid #444"></div>
<div class="a" style="left:1709px;top:678px;width:37px;height:21px;background:linear-gradient(180deg,#e8eef5,#c9d6e4);border:1px solid #7a8a9c;border-radius:3px"></div>
<div class="a" style="left:1720px;top:682px;width:14px;height:11px;border:2px solid #444;background:transparent"></div>
<div class="a" style="left:1750px;top:678px;width:32px;height:21px;background:linear-gradient(180deg,#e8a090 0%,#d45a44 50%,#c03a22 51%,#d86a4a 100%);border:1px solid #6a2a1a;border-radius:3px"></div>
<svg class="a" style="left:1761px;top:679px;" width="18" height="17" viewBox="0 0 18 17"><path d="M4 4L14 13M14 4L4 13" stroke="#444" stroke-width="5"/><path d="M4 4L14 13M14 4L4 13" stroke="#f4f4f4" stroke-width="3"/></svg>
<div class="a" style="left:1287px;top:702px;width:495px;height:352px;background:linear-gradient(180deg,#dfe8f2 0%,#d8e3ef 100%)"></div>
<div class="a" style="left:1287px;top:702px;width:495px;height:23px;background:linear-gradient(180deg,#f2f5f9,#e4eaf1);border-bottom:1px solid #c8d2de"></div>
<div class="t" style="left:1296px;top:705px;font-size:15px;color:#111;line-height:18px">查看(V)</div>
<div class="t" style="left:1362px;top:705px;font-size:15px;color:#111;line-height:18px">编辑(E)</div>
<div class="t" style="left:1428px;top:705px;font-size:15px;color:#111;line-height:18px">帮助(H)</div>
<div class="a" style="left:1301px;top:740px;width:476px;height:61px;background:linear-gradient(180deg,#eef3f9 0%,#fbfcfe 60%,#ffffff 100%);border:1px solid #8a9cb2;border-radius:2px"></div>
<div class="t" style="left:1600px;top:762px;font-size:27px;color:#111;line-height:30px;width:170px;text-align:right;letter-spacing:0.5px">2925</div>
<div class="a" style="left:1301px;top:808px;width:235px;height:33px;background:linear-gradient(180deg,#e6edf5,#d6e0eb);border:1px solid #8d9cad;border-radius:3px"></div>
<svg class="a" style="left:1311px;top:817px;" width="14" height="14" viewBox="0 0 14 14"><circle cx="7" cy="7" r="6" fill="#f4f6f8" stroke="#8a96a4"/><circle cx="7" cy="7" r="3.6" fill="#1f5fa8"/><circle cx="6" cy="6" r="1.3" fill="#8ec0f0"/></svg>
<div class="t" style="left:1328px;top:814px;font-size:15px;color:#1e2a3a;line-height:18px">度</div>
<svg class="a" style="left:1389px;top:817px;" width="14" height="14" viewBox="0 0 14 14"><circle cx="7" cy="7" r="6" fill="#f4f6f8" stroke="#8a96a4"/></svg>
<div class="t" style="left:1407px;top:814px;font-size:15px;color:#1e2a3a;line-height:18px">弧度</div>
<svg class="a" style="left:1472px;top:817px;" width="14" height="14" viewBox="0 0 14 14"><circle cx="7" cy="7" r="6" fill="#f4f6f8" stroke="#8a96a4"/></svg>
<div class="t" style="left:1490px;top:814px;font-size:15px;color:#1e2a3a;line-height:18px">梯度</div>
<div class="a" style="left:1542px;top:808px;width:41px;height:32px;background:linear-gradient(180deg,#dde6f0,#d4deea);border:1px solid #95a3b4;border-radius:3px;color:#1b3454;font-size:14px;text-align:center;line-height:30px">MC</div>
<div class="a" style="left:1590px;top:808px;width:41px;height:32px;background:linear-gradient(180deg,#dde6f0,#d4deea);border:1px solid #95a3b4;border-radius:3px;color:#1b3454;font-size:14px;text-align:center;line-height:30px">MR</div>
<div class="a" style="left:1638px;top:808px;width:41px;height:32px;background:linear-gradient(180deg,#dde6f0,#d4deea);border:1px solid #95a3b4;border-radius:3px;color:#1b3454;font-size:14px;text-align:center;line-height:30px">MS</div>
<div class="a" style="left:1687px;top:808px;width:41px;height:32px;background:linear-gradient(180deg,#dde6f0,#d4deea);border:1px solid #95a3b4;border-radius:3px;color:#1b3454;font-size:14px;text-align:center;line-height:30px">M+</div>
<div class="a" style="left:1735px;top:808px;width:41px;height:32px;background:linear-gradient(180deg,#dde6f0,#d4deea);border:1px solid #95a3b4;border-radius:3px;color:#1b3454;font-size:14px;text-align:center;line-height:30px">M-</div>
<div class="a" style="left:1301px;top:848px;width:41px;height:32px;background:linear-gradient(180deg,#f7f9fb 0%,#eaeff5 50%,#dde4ec 51%,#e6ebf1 100%);border:1px solid #8f9cad;border-radius:3px;color:#1b3454;font-size:14px;text-align:center;line-height:30px"></div>
<div class="a" style="left:1349px;top:848px;width:41px;height:32px;background:linear-gradient(180deg,#f7f9fb 0%,#eaeff5 50%,#dde4ec 51%,#e6ebf1 100%);border:1px solid #8f9cad;border-radius:3px;color:#1b3454;font-size:14px;text-align:center;line-height:30px">Inv</div>
<div class="a" style="left:1397px;top:848px;width:41px;height:32px;background:linear-gradient(180deg,#f7f9fb 0%,#eaeff5 50%,#dde4ec 51%,#e6ebf1 100%);border:1px solid #8f9cad;border-radius:3px;color:#1b3454;font-size:14px;text-align:center;line-height:30px">ln</div>
<div class="a" style="left:1446px;top:848px;width:41px;height:32px;background:linear-gradient(180deg,#f7f9fb 0%,#eaeff5 50%,#dde4ec 51%,#e6ebf1 100%);border:1px solid #8f9cad;border-radius:3px;color:#1b3454;font-size:14px;text-align:center;line-height:30px">(</div>
<div class="a" style="left:1494px;top:848px;width:41px;height:32px;background:linear-gradient(180deg,#f7f9fb 0%,#eaeff5 50%,#dde4ec 51%,#e6ebf1 100%);border:1px solid #8f9cad;border-radius:3px;color:#1b3454;font-size:14px;text-align:center;line-height:30px">)</div>
<div class="a" style="left:1542px;top:848px;width:41px;height:32px;background:linear-gradient(180deg,#f7f9fb 0%,#eaeff5 50%,#dde4ec 51%,#e6ebf1 100%);border:1px solid #8f9cad;border-radius:3px;color:#1b3454;font-size:14px;text-align:center;line-height:30px">&#10229;</div>
<div class="a" style="left:1590px;top:848px;width:41px;height:32px;background:linear-gradient(180deg,#f7f9fb 0%,#eaeff5 50%,#dde4ec 51%,#e6ebf1 100%);border:1px solid #8f9cad;border-radius:3px;color:#1b3454;font-size:14px;text-align:center;line-height:30px">CE</div>
<div class="a" style="left:1638px;top:848px;width:41px;height:32px;background:linear-gradient(180deg,#f7f9fb 0%,#eaeff5 50%,#dde4ec 51%,#e6ebf1 100%);border:1px solid #8f9cad;border-radius:3px;color:#1b3454;font-size:14px;text-align:center;line-height:30px">C</div>
<div class="a" style="left:1687px;top:848px;width:41px;height:32px;background:linear-gradient(180deg,#f7f9fb 0%,#eaeff5 50%,#dde4ec 51%,#e6ebf1 100%);border:1px solid #8f9cad;border-radius:3px;color:#1b3454;font-size:14px;text-align:center;line-height:30px">±</div>
<div class="a" style="left:1735px;top:848px;width:41px;height:32px;background:linear-gradient(180deg,#f7f9fb 0%,#eaeff5 50%,#dde4ec 51%,#e6ebf1 100%);border:1px solid #8f9cad;border-radius:3px;color:#1b3454;font-size:14px;text-align:center;line-height:30px">√</div>
<div class="a" style="left:1301px;top:887px;width:41px;height:32px;background:linear-gradient(180deg,#f7f9fb 0%,#eaeff5 50%,#dde4ec 51%,#e6ebf1 100%);border:1px solid #8f9cad;border-radius:3px;color:#1b3454;font-size:14px;text-align:center;line-height:30px">Int</div>
<div class="a" style="left:1349px;top:887px;width:41px;height:32px;background:linear-gradient(180deg,#f7f9fb 0%,#eaeff5 50%,#dde4ec 51%,#e6ebf1 100%);border:1px solid #8f9cad;border-radius:3px;color:#1b3454;font-size:14px;text-align:center;line-height:30px">sinh</div>
<div class="a" style="left:1397px;top:887px;width:41px;height:32px;background:linear-gradient(180deg,#f7f9fb 0%,#eaeff5 50%,#dde4ec 51%,#e6ebf1 100%);border:1px solid #8f9cad;border-radius:3px;color:#1b3454;font-size:14px;text-align:center;line-height:30px">sin</div>
<div class="a" style="left:1446px;top:887px;width:41px;height:32px;background:linear-gradient(180deg,#f7f9fb 0%,#eaeff5 50%,#dde4ec 51%,#e6ebf1 100%);border:1px solid #8f9cad;border-radius:3px;color:#1b3454;font-size:14px;text-align:center;line-height:30px"><i style='font-family:Liberation Serif;font-size:18px'>x</i><sup style='font-size:10px'>2</sup></div>
<div class="a" style="left:1494px;top:887px;width:41px;height:32px;background:linear-gradient(180deg,#f7f9fb 0%,#eaeff5 50%,#dde4ec 51%,#e6ebf1 100%);border:1px solid #8f9cad;border-radius:3px;color:#1b3454;font-size:18px;text-align:center;line-height:30px">n!</div>
<div class="a" style="left:1542px;top:887px;width:41px;height:32px;background:linear-gradient(180deg,#f7f9fb 0%,#eaeff5 50%,#dde4ec 51%,#e6ebf1 100%);border:1px solid #8f9cad;border-radius:3px;color:#1b3454;font-size:20px;text-align:center;line-height:30px">7</div>
<div class="a" style="left:1590px;top:887px;width:41px;height:32px;background:linear-gradient(180deg,#f7f9fb 0%,#eaeff5 50%,#dde4ec 51%,#e6ebf1 100%);border:1px solid #8f9cad;border-radius:3px;color:#1b3454;font-size:20px;text-align:center;line-height:30px">8</div>
<div class="a" style="left:1638px;top:887px;width:41px;height:32px;background:linear-gradient(180deg,#f7f9fb 0%,#eaeff5 50%,#dde4ec 51%,#e6ebf1 100%);border:1px solid #8f9cad;border-radius:3px;color:#1b3454;font-size:20px;text-align:center;line-height:30px">9</div>
<div class="a" style="left:1687px;top:887px;width:41px;height:32px;background:linear-gradient(180deg,#f7f9fb 0%,#eaeff5 50%,#dde4ec 51%,#e6ebf1 100%);border:1px solid #8f9cad;border-radius:3px;color:#1b3454;font-size:14px;text-align:center;line-height:30px">/</div>
<div class="a" style="left:1735px;top:887px;width:41px;height:32px;background:linear-gradient(180deg,#e9eef4,#dde4ec);border:1px solid #b2bcc8;border-radius:3px;color:#1b3454;font-size:14px;text-align:center;line-height:30px">%</div>
<div class="a" style="left:1301px;top:926px;width:41px;height:32px;background:linear-gradient(180deg,#f7f9fb 0%,#eaeff5 50%,#dde4ec 51%,#e6ebf1 100%);border:1px solid #8f9cad;border-radius:3px;color:#1b3454;font-size:14px;text-align:center;line-height:30px">dms</div>
<div class="a" style="left:1349px;top:926px;width:41px;height:32px;background:linear-gradient(180deg,#f7f9fb 0%,#eaeff5 50%,#dde4ec 51%,#e6ebf1 100%);border:1px solid #8f9cad;border-radius:3px;color:#1b3454;font-size:14px;text-align:center;line-height:30px">cosh</div>
<div class="a" style="left:1397px;top:926px;width:41px;height:32px;background:linear-gradient(180deg,#f7f9fb 0%,#eaeff5 50%,#dde4ec 51%,#e6ebf1 100%);border:1px solid #8f9cad;border-radius:3px;color:#1b3454;font-size:14px;text-align:center;line-height:30px">cos</div>
<div class="a" style="left:1446px;top:926px;width:41px;height:32px;background:linear-gradient(180deg,#f7f9fb 0%,#eaeff5 50%,#dde4ec 51%,#e6ebf1 100%);border:1px solid #8f9cad;border-radius:3px;color:#1b3454;font-size:14px;text-align:center;line-height:30px"><i style='font-family:Liberation Serif;font-size:18px'>x</i><sup style='font-size:10px'><i>y</i></sup></div>
<div class="a" style="left:1494px;top:926px;width:41px;height:32px;background:linear-gradient(180deg,#f7f9fb 0%,#eaeff5 50%,#dde4ec 51%,#e6ebf1 100%);border:1px solid #8f9cad;border-radius:3px;color:#1b3454;font-size:14px;text-align:center;line-height:30px"><sup style='font-size:10px'><i>y</i></sup>√<i style='font-family:Liberation Serif;font-size:17px'>x</i></div>
<div class="a" style="left:1542px;top:926px;width:41px;height:32px;background:linear-gradient(180deg,#f7f9fb 0%,#eaeff5 50%,#dde4ec 51%,#e6ebf1 100%);border:1px solid #8f9cad;border-radius:3px;color:#1b3454;font-size:20px;text-align:center;line-height:30px">4</div>
<div class="a" style="left:1590px;top:926px;width:41px;height:32px;background:linear-gradient(180deg,#fdf1c4 0%,#fbdc8a 45%,#f7c04a 55%,#fbd87a 100%);border:1px solid #c8963a;border-radius:3px;color:#1b3454;font-size:20px;text-align:center;line-height:30px">5</div>
<div class="a" style="left:1638px;top:926px;width:41px;height:32px;background:linear-gradient(180deg,#f7f9fb 0%,#eaeff5 50%,#dde4ec 51%,#e6ebf1 100%);border:1px solid #8f9cad;border-radius:3px;color:#1b3454;font-size:20px;text-align:center;line-height:30px">6</div>
<div class="a" style="left:1687px;top:926px;width:41px;height:32px;background:linear-gradient(180deg,#f7f9fb 0%,#eaeff5 50%,#dde4ec 51%,#e6ebf1 100%);border:1px solid #8f9cad;border-radius:3px;color:#1b3454;font-size:14px;text-align:center;line-height:30px">*</div>
<div class="a" style="left:1735px;top:926px;width:41px;height:32px;background:linear-gradient(180deg,#f7f9fb 0%,#eaeff5 50%,#dde4ec 51%,#e6ebf1 100%);border:1px solid #8f9cad;border-radius:3px;color:#1b3454;font-size:14px;text-align:center;line-height:30px">1/<i style='font-family:Liberation Serif'>x</i></div>
<div class="a" style="left:1301px;top:966px;width:41px;height:32px;background:linear-gradient(180deg,#f7f9fb 0%,#eaeff5 50%,#dde4ec 51%,#e6ebf1 100%);border:1px solid #8f9cad;border-radius:3px;color:#1b3454;font-size:14px;text-align:center;line-height:30px">π</div>
<div class="a" style="left:1349px;top:966px;width:41px;height:32px;background:linear-gradient(180deg,#f7f9fb 0%,#eaeff5 50%,#dde4ec 51%,#e6ebf1 100%);border:1px solid #8f9cad;border-radius:3px;color:#1b3454;font-size:14px;text-align:center;line-height:30px">tanh</div>
<div class="a" style="left:1397px;top:966px;width:41px;height:32px;background:linear-gradient(180deg,#f7f9fb 0%,#eaeff5 50%,#dde4ec 51%,#e6ebf1 100%);border:1px solid #8f9cad;border-radius:3px;color:#1b3454;font-size:14px;text-align:center;line-height:30px">tan</div>
<div class="a" style="left:1446px;top:966px;width:41px;height:32px;background:linear-gradient(180deg,#f7f9fb 0%,#eaeff5 50%,#dde4ec 51%,#e6ebf1 100%);border:1px solid #8f9cad;border-radius:3px;color:#1b3454;font-size:14px;text-align:center;line-height:30px"><i style='font-family:Liberation Serif;font-size:18px'>x</i><sup style='font-size:10px'>3</sup></div>
<div class="a" style="left:1494px;top:966px;width:41px;height:32px;background:linear-gradient(180deg,#f7f9fb 0%,#eaeff5 50%,#dde4ec 51%,#e6ebf1 100%);border:1px solid #8f9cad;border-radius:3px;color:#1b3454;font-size:14px;text-align:center;line-height:30px"><sup style='font-size:10px'>3</sup>√<i style='font-family:Liberation Serif;font-size:17px'>x</i></div>
<div class="a" style="left:1542px;top:966px;width:41px;height:32px;background:linear-gradient(180deg,#f7f9fb 0%,#eaeff5 50%,#dde4ec 51%,#e6ebf1 100%);border:1px solid #8f9cad;border-radius:3px;color:#1b3454;font-size:20px;text-align:center;line-height:30px">1</div>
<div class="a" style="left:1590px;top:966px;width:41px;height:32px;background:linear-gradient(180deg,#fcf6e4 0%,#f6e7bd 50%,#f0dca8 100%);border:1px solid #c8b07a;border-radius:3px;color:#1b3454;font-size:20px;text-align:center;line-height:30px">2</div>
<div class="a" style="left:1638px;top:966px;width:41px;height:32px;background:linear-gradient(180deg,#f7f9fb 0%,#eaeff5 50%,#dde4ec 51%,#e6ebf1 100%);border:1px solid #8f9cad;border-radius:3px;color:#1b3454;font-size:20px;text-align:center;line-height:30px">3</div>
<div class="a" style="left:1687px;top:966px;width:41px;height:32px;background:linear-gradient(180deg,#f7f9fb 0%,#eaeff5 50%,#dde4ec 51%,#e6ebf1 100%);border:1px solid #8f9cad;border-radius:3px;color:#1b3454;font-size:14px;text-align:center;line-height:30px">-</div>
<div class="a" style="left:1301px;top:1005px;width:41px;height:32px;background:linear-gradient(180deg,#f7f9fb 0%,#eaeff5 50%,#dde4ec 51%,#e6ebf1 100%);border:1px solid #8f9cad;border-radius:3px;color:#1b3454;font-size:14px;text-align:center;line-height:30px">F-E</div>
<div class="a" style="left:1349px;top:1005px;width:41px;height:32px;background:linear-gradient(180deg,#f7f9fb 0%,#eaeff5 50%,#dde4ec 51%,#e6ebf1 100%);border:1px solid #8f9cad;border-radius:3px;color:#1b3454;font-size:14px;text-align:center;line-height:30px">Exp</div>
<div class="a" style="left:1397px;top:1005px;width:41px;height:32px;background:linear-gradient(180deg,#f7f9fb 0%,#eaeff5 50%,#dde4ec 51%,#e6ebf1 100%);border:1px solid #8f9cad;border-radius:3px;color:#1b3454;font-size:14px;text-align:center;line-height:30px">Mod</div>
<div class="a" style="left:1446px;top:1005px;width:41px;height:32px;background:linear-gradient(180deg,#f7f9fb 0%,#eaeff5 50%,#dde4ec 51%,#e6ebf1 100%);border:1px solid #8f9cad;border-radius:3px;color:#1b3454;font-size:14px;text-align:center;line-height:30px">log</div>
<div class="a" style="left:1494px;top:1005px;width:41px;height:32px;background:linear-gradient(180deg,#f7f9fb 0%,#eaeff5 50%,#dde4ec 51%,#e6ebf1 100%);border:1px solid #8f9cad;border-radius:3px;color:#1b3454;font-size:16px;text-align:center;line-height:30px">10<sup style='font-size:10px'><i>x</i></sup></div>
<div class="a" style="left:1542px;top:1005px;width:89px;height:32px;background:linear-gradient(180deg,#f7f9fb 0%,#eaeff5 50%,#dde4ec 51%,#e6ebf1 100%);border:1px solid #8f9cad;border-radius:3px;color:#1b3454;font-size:20px;text-align:center;line-height:30px">0</div>
<div class="a" style="left:1638px;top:1005px;width:41px;height:32px;background:linear-gradient(180deg,#f7f9fb 0%,#eaeff5 50%,#dde4ec 51%,#e6ebf1 100%);border:1px solid #8f9cad;border-radius:3px;color:#1b3454;font-size:16px;text-align:center;line-height:30px">.</div>
<div class="a" style="left:1687px;top:1005px;width:41px;height:32px;background:linear-gradient(180deg,#f7f9fb 0%,#eaeff5 50%,#dde4ec 51%,#e6ebf1 100%);border:1px solid #8f9cad;border-radius:3px;color:#1b3454;font-size:16px;text-align:center;line-height:30px">+</div>
<div class="a" style="left:1735px;top:966px;width:41px;height:71px;background:linear-gradient(180deg,#f7f9fb 0%,#eaeff5 50%,#dde4ec 51%,#e6ebf1 100%);border:1px solid #8f9cad;border-radius:3px;color:#1b3454;font-size:26px;text-align:center;line-height:69px">=</div>
<div class="a" style="left:1758px;top:690px;width:24px;height:59px;background:rgba(48,50,54,0.75);border-radius:6px 0 0 6px"></div>
<svg class="a" style="left:1763px;top:709px;" width="14" height="22" viewBox="0 0 14 22"><path d="M3 2l8 9-8 9" fill="none" stroke="#cfcfcf" stroke-width="1.6"/></svg>
<svg class="a" style="left:1581px;top:1032px;" width="20" height="28" viewBox="0 0 20 28"><path d="M2 2v20l5-5 4 9 3-1.5-4-8.5h7z" fill="#fff" stroke="#000" stroke-width="1.3" stroke-linejoin="round"/></svg>
<div class="a" style="left:15px;top:1090px;width:103px;height:37px;background:#9b9b9b;border-radius:19px"></div>
<svg class="a" style="left:24px;top:1097px;" width="24" height="24" viewBox="0 0 24 24"><circle cx="12" cy="12" r="10" fill="#e6e6e6"/><circle cx="8.5" cy="9.5" r="1.6" fill="#9b9b9b"/><circle cx="15.5" cy="9.5" r="1.6" fill="#9b9b9b"/><path d="M6.5 13h11a5.5 5.5 0 0 1-11 0z" fill="#9b9b9b"/></svg>
<svg class="a" style="left:54px;top:1098px;" width="24" height="22" viewBox="0 0 24 22"><path d="M2 3h19v13h-9l-5 4v-4H2z" fill="#e6e6e6"/><circle cx="7" cy="9.5" r="1.4" fill="#9b9b9b"/><circle cx="11.5" cy="9.5" r="1.4" fill="#9b9b9b"/><circle cx="16" cy="9.5" r="1.4" fill="#9b9b9b"/></svg>
<div class="a" style="left:83px;top:1098px;width:1px;height:22px;background:#b5b5b5"></div>
<svg class="a" style="left:92px;top:1101px;" width="12" height="16" viewBox="0 0 12 16"><path d="M9 2L3 8l6 6" fill="none" stroke="#d6d6d6" stroke-width="1.6"/></svg></body></html>
